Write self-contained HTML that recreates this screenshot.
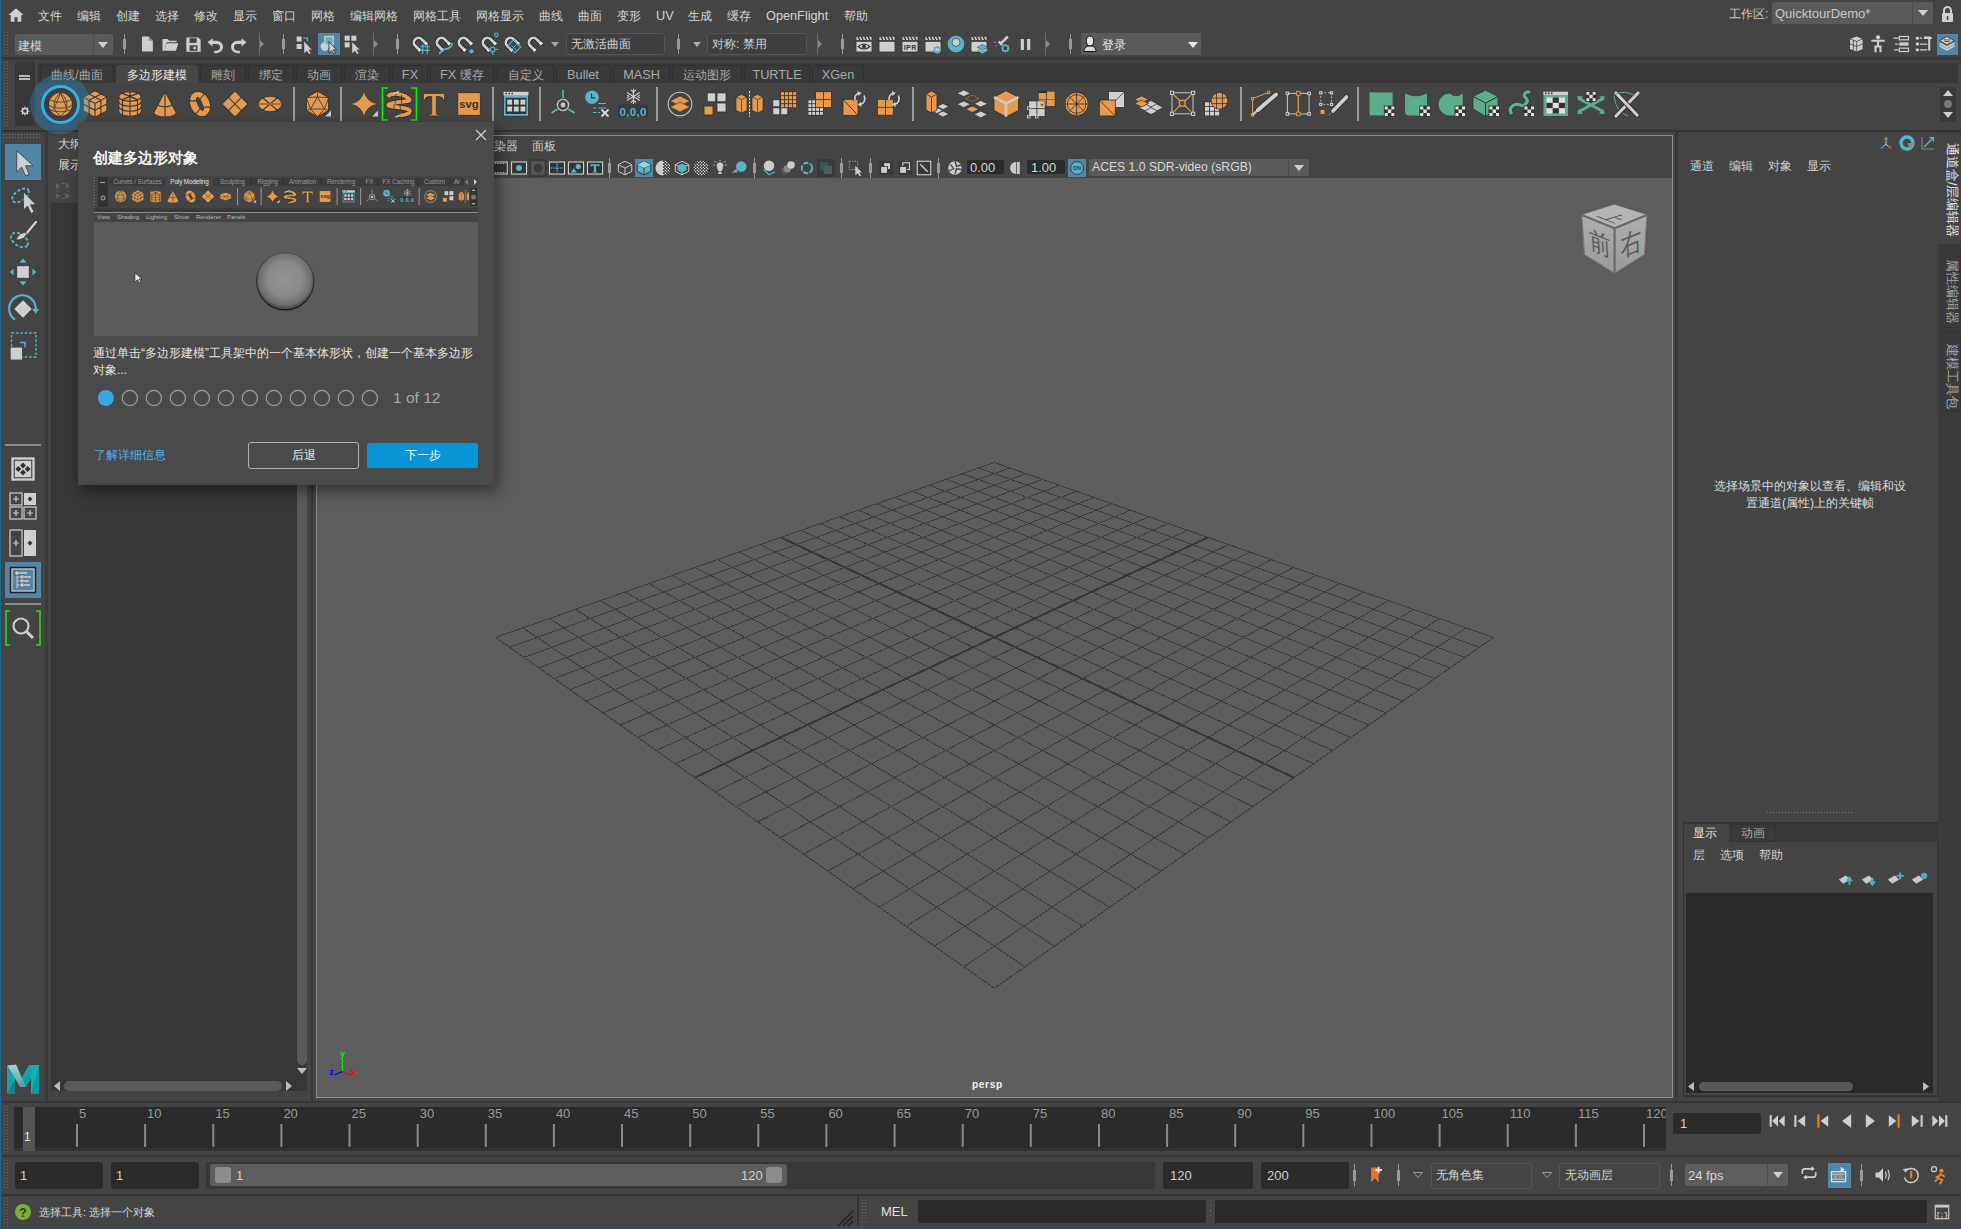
<!DOCTYPE html><html><head><meta charset="utf-8"><style>
html,body{margin:0;padding:0;width:1961px;height:1229px;overflow:hidden;background:#444444;font-family:"Liberation Sans",sans-serif;}
body>div,body>svg{position:absolute;}
svg{overflow:visible}
.t{white-space:nowrap;line-height:1;}
.l{font-size:1.06em}
</style></head><body>
<div style="left:0px;top:0px;width:1px;height:1229px;background:#1b6a8c;"></div>
<div style="left:0px;top:1228px;width:1961px;height:1px;background:#1a5a78;"></div>
<div style="left:0px;top:1227px;width:1961px;height:1px;background:#32505c;"></div>
<svg style="left:7.0px;top:6.0px" width="18" height="18" viewBox="0 0 24 24"><path d="M12 3 L2 12 H5 V21 H10 V15 H14 V21 H19 V12 H22Z" fill="#cfcfcf"/></svg>
<div class="t" style="left:38px;top:10px;font-size:12px;color:#d4d4d4;">文件</div>
<div class="t" style="left:77px;top:10px;font-size:12px;color:#d4d4d4;">编辑</div>
<div class="t" style="left:116px;top:10px;font-size:12px;color:#d4d4d4;">创建</div>
<div class="t" style="left:155px;top:10px;font-size:12px;color:#d4d4d4;">选择</div>
<div class="t" style="left:194px;top:10px;font-size:12px;color:#d4d4d4;">修改</div>
<div class="t" style="left:233px;top:10px;font-size:12px;color:#d4d4d4;">显示</div>
<div class="t" style="left:272px;top:10px;font-size:12px;color:#d4d4d4;">窗口</div>
<div class="t" style="left:311px;top:10px;font-size:12px;color:#d4d4d4;">网格</div>
<div class="t" style="left:350px;top:10px;font-size:12px;color:#d4d4d4;">编辑网格</div>
<div class="t" style="left:413px;top:10px;font-size:12px;color:#d4d4d4;">网格工具</div>
<div class="t" style="left:476px;top:10px;font-size:12px;color:#d4d4d4;">网格显示</div>
<div class="t" style="left:539px;top:10px;font-size:12px;color:#d4d4d4;">曲线</div>
<div class="t" style="left:578px;top:10px;font-size:12px;color:#d4d4d4;">曲面</div>
<div class="t" style="left:617px;top:10px;font-size:12px;color:#d4d4d4;">变形</div>
<div class="t" style="left:656px;top:10px;font-size:12px;color:#d4d4d4;"><span class="l">UV</span></div>
<div class="t" style="left:688px;top:10px;font-size:12px;color:#d4d4d4;">生成</div>
<div class="t" style="left:727px;top:10px;font-size:12px;color:#d4d4d4;">缓存</div>
<div class="t" style="left:766px;top:10px;font-size:12px;color:#d4d4d4;"><span class="l">OpenFlight</span></div>
<div class="t" style="left:844px;top:10px;font-size:12px;color:#d4d4d4;">帮助</div>
<div class="t" style="left:1729px;top:8px;font-size:12px;color:#c8c8c8;">工作区:</div>
<div style="left:1772px;top:2px;width:161px;height:22px;background:#5a5a5a;border-radius:2px"></div>
<div style="left:1912px;top:2px;width:1px;height:22px;background:#4a4a4a;"></div>
<div class="t" style="left:1775px;top:7px;font-size:13px;color:#c8c8c8;">QuicktourDemo*</div>
<svg style="left:1918px;top:10px;" width="10" height="6" viewBox="0 0 10 6"><path d="M0 0H10L5 6Z" fill="#cfcfcf"/></svg>
<svg style="left:1941px;top:5px;" width="13" height="17" viewBox="0 0 13 17"><path d="M3 8V5.5A3.5 3.5 0 0 1 10 5.5V8" stroke="#cfcfcf" stroke-width="2" fill="none"/><rect x="1" y="8" width="11" height="9" rx="1" fill="#cfcfcf"/><rect x="5.8" y="11" width="1.6" height="4" fill="#444"/></svg>
<svg style="left:4px;top:32px;" width="4" height="24" viewBox="0 0 4 24"><g fill="#6a6a6a"><rect x="0" y="0" width="1" height="1"/><rect x="3" y="0" width="1" height="1"/><rect x="0" y="3" width="1" height="1"/><rect x="3" y="3" width="1" height="1"/><rect x="0" y="6" width="1" height="1"/><rect x="3" y="6" width="1" height="1"/><rect x="0" y="9" width="1" height="1"/><rect x="3" y="9" width="1" height="1"/><rect x="0" y="12" width="1" height="1"/><rect x="3" y="12" width="1" height="1"/><rect x="0" y="15" width="1" height="1"/><rect x="3" y="15" width="1" height="1"/><rect x="0" y="18" width="1" height="1"/><rect x="3" y="18" width="1" height="1"/><rect x="0" y="21" width="1" height="1"/><rect x="3" y="21" width="1" height="1"/></g></svg>
<div style="left:15px;top:34px;width:98px;height:21px;background:#5a5a5a;border-radius:2px"></div>
<div style="left:93px;top:34px;width:1px;height:21px;background:#4d4d4d;"></div>
<div class="t" style="left:18px;top:40px;font-size:12px;color:#d4d4d4;">建模</div>
<svg style="left:98px;top:42px;" width="10" height="6" viewBox="0 0 10 6"><path d="M0 0H10L5 6Z" fill="#cfcfcf"/></svg>
<svg style="left:123px;top:34px;" width="3" height="20" viewBox="0 0 3 20"><rect x="1" y="0" width="1" height="20" fill="#999"/><rect x="0" y="5" width="3" height="10" fill="#999"/></svg>
<svg style="left:137.0px;top:34.0px" width="20" height="20" viewBox="0 0 24 24"><path d="M6 3H14L19 8V21H6Z" fill="#cfcfcf"/><path d="M14 3V8H19" fill="#888"/></svg>
<svg style="left:160.0px;top:34.0px" width="20" height="20" viewBox="0 0 24 24"><path d="M3 6H9L11 8H20V10H8L5 20H3Z" fill="#cfcfcf"/><path d="M8 11H22L19 20H5Z" fill="#cfcfcf"/></svg>
<svg style="left:183.5px;top:34.5px" width="19" height="19" viewBox="0 0 24 24"><path d="M3 3H18L21 6V21H3Z" fill="#cfcfcf"/><rect x="7" y="4" width="9" height="6" fill="#444"/><rect x="7" y="13" width="10" height="7" fill="#444"/><rect x="12" y="15" width="3" height="3" fill="#cfcfcf"/></svg>
<svg style="left:205.0px;top:34.0px" width="20" height="20" viewBox="0 0 24 24"><path d="M9 5L3 10L9 15V12H14A4 4 0 0 1 14 20H11V23H14A7 7 0 0 0 14 8H9Z" fill="#cfcfcf"/></svg>
<svg style="left:229.0px;top:34.0px" width="20" height="20" viewBox="0 0 24 24"><path d="M15 5L21 10L15 15V12H10A4 4 0 0 0 10 20H13V23H10A7 7 0 0 1 10 8H15Z" fill="#cfcfcf"/></svg>
<svg style="left:259px;top:33px;" width="6" height="22" viewBox="0 0 6 22"><rect x="0" y="0" width="1" height="22" fill="#6a6a6a"/><path d="M1 7L5 11L1 15Z" fill="#8a8a8a"/></svg>
<svg style="left:282px;top:34px;" width="3" height="20" viewBox="0 0 3 20"><rect x="1" y="0" width="1" height="20" fill="#999"/><rect x="0" y="5" width="3" height="10" fill="#999"/></svg>
<svg style="left:295.0px;top:34.0px" width="20" height="20" viewBox="0 0 24 24"><rect x="2" y="3" width="6" height="6" fill="#cfcfcf"/><rect x="2" y="12" width="6" height="6" fill="#cfcfcf"/><path d="M10 5H15V9" stroke="#5ab4c8" stroke-width="1.5" fill="none"/><path d="M11 9L11 23L14 20L17 24L19 23L16 19H20Z" fill="#cfcfcf"/></svg>
<div style="left:318px;top:33px;width:22px;height:22px;background:#5285a6;"></div>
<svg style="left:319.0px;top:34.0px" width="20" height="20" viewBox="0 0 24 24"><circle cx="7" cy="15" r="5" fill="#cfcfcf"/><rect x="7" y="3" width="10" height="10" fill="#5ab4c8" stroke="#cfcfcf" stroke-width="1.5"/><path d="M12 9L12 23L15 20L18 24L20 23L17 19H21Z" fill="#cfcfcf" stroke="#333" stroke-width="1"/></svg>
<svg style="left:343.0px;top:34.0px" width="20" height="20" viewBox="0 0 24 24"><rect x="2" y="2" width="6" height="6" fill="#cfcfcf"/><rect x="10" y="2" width="6" height="6" fill="#cfcfcf"/><rect x="2" y="10" width="6" height="6" fill="#cfcfcf"/><path d="M11 10L11 23L14 20L17 24L19 23L16 19H20Z" fill="#cfcfcf"/></svg>
<svg style="left:373px;top:33px;" width="6" height="22" viewBox="0 0 6 22"><rect x="0" y="0" width="1" height="22" fill="#6a6a6a"/><path d="M1 7L5 11L1 15Z" fill="#8a8a8a"/></svg>
<svg style="left:396px;top:34px;" width="3" height="20" viewBox="0 0 3 20"><rect x="1" y="0" width="1" height="20" fill="#999"/><rect x="0" y="5" width="3" height="10" fill="#999"/></svg>
<svg style="left:409.0px;top:33.0px" width="22" height="22" viewBox="0 0 24 24"><g transform="rotate(-45 11 11)"><path d="M6 17V10A5 5 0 0 1 16 10V17" stroke="#222" stroke-width="4.6" fill="none"/><path d="M6 17V10A5 5 0 0 1 16 10V17" stroke="#cfcfcf" stroke-width="3" fill="none"/><rect x="4.3" y="15.5" width="3.4" height="2.5" fill="#eee"/><rect x="14.3" y="15.5" width="3.4" height="2.5" fill="#eee"/></g><path d="M12 15H23M12 19H23M15 12V23M20 12V23" stroke="#5ab4c8" stroke-width="1.3"/></svg>
<svg style="left:432.0px;top:33.0px" width="22" height="22" viewBox="0 0 24 24"><g transform="rotate(-45 11 11)"><path d="M6 17V10A5 5 0 0 1 16 10V17" stroke="#222" stroke-width="4.6" fill="none"/><path d="M6 17V10A5 5 0 0 1 16 10V17" stroke="#cfcfcf" stroke-width="3" fill="none"/><rect x="4.3" y="15.5" width="3.4" height="2.5" fill="#eee"/><rect x="14.3" y="15.5" width="3.4" height="2.5" fill="#eee"/></g><path d="M8 23C10 18 13 18 17 17C20 16 22 14 22 11" stroke="#5ab4c8" stroke-width="2" fill="none"/></svg>
<svg style="left:454.0px;top:33.0px" width="22" height="22" viewBox="0 0 24 24"><g transform="rotate(-45 11 11)"><path d="M6 17V10A5 5 0 0 1 16 10V17" stroke="#222" stroke-width="4.6" fill="none"/><path d="M6 17V10A5 5 0 0 1 16 10V17" stroke="#cfcfcf" stroke-width="3" fill="none"/><rect x="4.3" y="15.5" width="3.4" height="2.5" fill="#eee"/><rect x="14.3" y="15.5" width="3.4" height="2.5" fill="#eee"/></g><circle cx="19" cy="20" r="2.3" fill="#5ab4c8"/></svg>
<svg style="left:478.0px;top:33.0px" width="22" height="22" viewBox="0 0 24 24"><g transform="rotate(-45 11 11)"><path d="M6 17V10A5 5 0 0 1 16 10V17" stroke="#222" stroke-width="4.6" fill="none"/><path d="M6 17V10A5 5 0 0 1 16 10V17" stroke="#cfcfcf" stroke-width="3" fill="none"/><rect x="4.3" y="15.5" width="3.4" height="2.5" fill="#eee"/><rect x="14.3" y="15.5" width="3.4" height="2.5" fill="#eee"/></g><circle cx="16" cy="18" r="2.5" stroke="#5ab4c8" stroke-width="1.3" fill="none"/><path d="M16 21V24M19 18H22M13 18H11" stroke="#5ab4c8" stroke-width="1.2"/><circle cx="20" cy="2" r="2" stroke="#5ab4c8" stroke-width="1.2" fill="none"/></svg>
<svg style="left:501.0px;top:33.0px" width="22" height="22" viewBox="0 0 24 24"><g transform="rotate(-45 11 11)"><path d="M6 17V10A5 5 0 0 1 16 10V17" stroke="#222" stroke-width="4.6" fill="none"/><path d="M6 17V10A5 5 0 0 1 16 10V17" stroke="#cfcfcf" stroke-width="3" fill="none"/><rect x="4.3" y="15.5" width="3.4" height="2.5" fill="#eee"/><rect x="14.3" y="15.5" width="3.4" height="2.5" fill="#eee"/></g><rect x="9" y="10" width="11" height="9" transform="rotate(45 14.5 14.5)" stroke="#5ab4c8" stroke-width="1.2" fill="none"/><path d="M11 13L17 19M12.5 17L16 13.5" stroke="#5ab4c8" stroke-width="1"/></svg>
<svg style="left:524.0px;top:33.0px" width="22" height="22" viewBox="0 0 24 24"><g transform="rotate(-45 11 11)"><path d="M6 17V10A5 5 0 0 1 16 10V17" stroke="#222" stroke-width="4.6" fill="none"/><path d="M6 17V10A5 5 0 0 1 16 10V17" stroke="#cfcfcf" stroke-width="3" fill="none"/><rect x="4.3" y="15.5" width="3.4" height="2.5" fill="#eee"/><rect x="14.3" y="15.5" width="3.4" height="2.5" fill="#eee"/></g></svg>
<svg style="left:551px;top:42px;" width="8" height="5" viewBox="0 0 8 5"><path d="M0 0H8L4 5Z" fill="#aaa"/></svg>
<div style="left:566px;top:33px;width:99px;height:22px;background:#3f3f3f;border:1px solid #555;border-radius:3px;box-sizing:border-box"></div>
<div class="t" style="left:571px;top:38px;font-size:12px;color:#d0d0d0;">无激活曲面</div>
<svg style="left:677px;top:34px;" width="3" height="20" viewBox="0 0 3 20"><rect x="1" y="0" width="1" height="20" fill="#999"/><rect x="0" y="5" width="3" height="10" fill="#999"/></svg>
<svg style="left:693px;top:42px;" width="8" height="5" viewBox="0 0 8 5"><path d="M0 0H8L4 5Z" fill="#aaa"/></svg>
<div style="left:707px;top:33px;width:100px;height:22px;background:#3f3f3f;border:1px solid #555;border-radius:3px;box-sizing:border-box"></div>
<div class="t" style="left:712px;top:38px;font-size:12px;color:#d0d0d0;">对称: 禁用</div>
<svg style="left:817px;top:33px;" width="6" height="22" viewBox="0 0 6 22"><rect x="0" y="0" width="1" height="22" fill="#6a6a6a"/><path d="M1 7L5 11L1 15Z" fill="#8a8a8a"/></svg>
<svg style="left:841px;top:34px;" width="3" height="20" viewBox="0 0 3 20"><rect x="1" y="0" width="1" height="20" fill="#999"/><rect x="0" y="5" width="3" height="10" fill="#999"/></svg>
<svg style="left:854.0px;top:34.0px" width="20" height="20" viewBox="0 0 24 24"><rect x="2.5" y="3" width="19" height="4.5" fill="#cfcfcf" stroke="#222" stroke-width="0.6"/><path d="M5 3.5L7 7M9 3.5L11 7M13 3.5L15 7M17 3.5L19 7" stroke="#333" stroke-width="1.6"/><rect x="2.5" y="9" width="19" height="12.5" fill="#cfcfcf" stroke="#222" stroke-width="0.6"/><path d="M5 15Q12 9 19 15Q12 21 5 15Z" fill="none" stroke="#333" stroke-width="1.3"/><circle cx="12" cy="15" r="2.3" fill="#333"/></svg>
<svg style="left:877.0px;top:34.0px" width="20" height="20" viewBox="0 0 24 24"><rect x="2.5" y="3" width="19" height="4.5" fill="#cfcfcf" stroke="#222" stroke-width="0.6"/><path d="M5 3.5L7 7M9 3.5L11 7M13 3.5L15 7M17 3.5L19 7" stroke="#333" stroke-width="1.6"/><rect x="2.5" y="9" width="19" height="12.5" fill="#cfcfcf" stroke="#222" stroke-width="0.6"/></svg>
<svg style="left:900.0px;top:34.0px" width="20" height="20" viewBox="0 0 24 24"><rect x="2.5" y="3" width="19" height="4.5" fill="#cfcfcf" stroke="#222" stroke-width="0.6"/><path d="M5 3.5L7 7M9 3.5L11 7M13 3.5L15 7M17 3.5L19 7" stroke="#333" stroke-width="1.6"/><rect x="2.5" y="9" width="19" height="12.5" fill="#cfcfcf" stroke="#222" stroke-width="0.6"/><text x="12" y="19.5" font-size="8.5" font-family="Liberation Sans" font-weight="bold" text-anchor="middle" fill="#333" textLength="15">IPR</text></svg>
<svg style="left:923.0px;top:34.0px" width="20" height="20" viewBox="0 0 24 24"><rect x="2.5" y="3" width="19" height="4.5" fill="#cfcfcf" stroke="#222" stroke-width="0.6"/><path d="M5 3.5L7 7M9 3.5L11 7M13 3.5L15 7M17 3.5L19 7" stroke="#333" stroke-width="1.6"/><rect x="2.5" y="9" width="19" height="12.5" fill="#cfcfcf" stroke="#222" stroke-width="0.6"/><g transform="translate(17 19)"><circle r="3.2" fill="none" stroke="#5ab4c8" stroke-width="1.76"/><rect x="-0.90" y="-4.64" width="1.79" height="1.92" fill="#5ab4c8" transform="rotate(0)"/><rect x="-0.90" y="-4.64" width="1.79" height="1.92" fill="#5ab4c8" transform="rotate(45)"/><rect x="-0.90" y="-4.64" width="1.79" height="1.92" fill="#5ab4c8" transform="rotate(90)"/><rect x="-0.90" y="-4.64" width="1.79" height="1.92" fill="#5ab4c8" transform="rotate(135)"/><rect x="-0.90" y="-4.64" width="1.79" height="1.92" fill="#5ab4c8" transform="rotate(180)"/><rect x="-0.90" y="-4.64" width="1.79" height="1.92" fill="#5ab4c8" transform="rotate(225)"/><rect x="-0.90" y="-4.64" width="1.79" height="1.92" fill="#5ab4c8" transform="rotate(270)"/><rect x="-0.90" y="-4.64" width="1.79" height="1.92" fill="#5ab4c8" transform="rotate(315)"/></g></svg>
<svg style="left:946.0px;top:34.0px" width="20" height="20" viewBox="0 0 24 24"><circle cx="12" cy="12" r="10" fill="#5ab4c8"/><circle cx="12" cy="10" r="4.8" fill="#cfcfcf" stroke="#333" stroke-width="0.8"/></svg>
<svg style="left:969.0px;top:34.0px" width="20" height="20" viewBox="0 0 24 24"><rect x="2.5" y="3" width="19" height="4.5" fill="#cfcfcf" stroke="#222" stroke-width="0.6"/><path d="M5 3.5L7 7M9 3.5L11 7M13 3.5L15 7M17 3.5L19 7" stroke="#333" stroke-width="1.6"/><rect x="2.5" y="9" width="19" height="12.5" fill="#cfcfcf" stroke="#222" stroke-width="0.6"/><path d="M10 16L16 12.5L22 16L16 19.5Z" fill="#5ab4c8" stroke="#333" stroke-width="0.6"/><path d="M10 19L16 22.5L22 19" stroke="#5ab4c8" stroke-width="2" fill="none"/></svg>
<svg style="left:992.0px;top:34.0px" width="20" height="20" viewBox="0 0 24 24"><path d="M11 11L19 3" stroke="#cfcfcf" stroke-width="3"/><path d="M8 9L12 13" stroke="#cfcfcf" stroke-width="3"/><g transform="translate(16 17)"><circle r="3.4" fill="none" stroke="#5ab4c8" stroke-width="1.87"/><rect x="-0.95" y="-4.93" width="1.90" height="2.04" fill="#5ab4c8" transform="rotate(0)"/><rect x="-0.95" y="-4.93" width="1.90" height="2.04" fill="#5ab4c8" transform="rotate(45)"/><rect x="-0.95" y="-4.93" width="1.90" height="2.04" fill="#5ab4c8" transform="rotate(90)"/><rect x="-0.95" y="-4.93" width="1.90" height="2.04" fill="#5ab4c8" transform="rotate(135)"/><rect x="-0.95" y="-4.93" width="1.90" height="2.04" fill="#5ab4c8" transform="rotate(180)"/><rect x="-0.95" y="-4.93" width="1.90" height="2.04" fill="#5ab4c8" transform="rotate(225)"/><rect x="-0.95" y="-4.93" width="1.90" height="2.04" fill="#5ab4c8" transform="rotate(270)"/><rect x="-0.95" y="-4.93" width="1.90" height="2.04" fill="#5ab4c8" transform="rotate(315)"/></g><path d="M2 10H5M4 15L6 13" stroke="#5ab4c8" stroke-width="1.2"/></svg>
<svg style="left:1015.5px;top:34.5px" width="19" height="19" viewBox="0 0 24 24"><rect x="6" y="5" width="4" height="14" fill="#cfcfcf"/><rect x="14" y="5" width="4" height="14" fill="#cfcfcf"/></svg>
<svg style="left:1045px;top:33px;" width="6" height="22" viewBox="0 0 6 22"><rect x="0" y="0" width="1" height="22" fill="#6a6a6a"/><path d="M1 7L5 11L1 15Z" fill="#8a8a8a"/></svg>
<svg style="left:1069px;top:34px;" width="3" height="20" viewBox="0 0 3 20"><rect x="1" y="0" width="1" height="20" fill="#999"/><rect x="0" y="5" width="3" height="10" fill="#999"/></svg>
<div style="left:1081px;top:33px;width:120px;height:22px;background:#5a5a5a;"></div>
<svg style="left:1083px;top:35px;" width="16" height="19" viewBox="0 0 16 19"><ellipse cx="7" cy="6" rx="3.8" ry="5" fill="#e4e4e4" stroke="#111" stroke-width="1"/><path d="M0.8 16.5C1.5 12 4 11 7 11C10 11 12.5 12 13.2 16.5Z" fill="#dcdcdc" stroke="#111" stroke-width="1"/></svg>
<div class="t" style="left:1102px;top:39px;font-size:12px;color:#e8e8e8;">登录</div>
<svg style="left:1188px;top:42px;" width="10" height="6" viewBox="0 0 10 6"><path d="M0 0H10L5 6Z" fill="#e8e8e8"/></svg>
<svg style="left:1845.0px;top:34.0px" width="20" height="20" viewBox="0 0 24 24"><path d="M6 6L14 3L21 6V18L14 21L6 18Z" fill="#cfcfcf"/><path d="M6 6L14 9L21 6M14 9V21M10 7.5V20M6 12L14 15L21 12" stroke="#444" stroke-width="1" fill="none"/></svg>
<svg style="left:1868.0px;top:34.0px" width="20" height="20" viewBox="0 0 24 24"><circle cx="12" cy="4" r="2.5" fill="#cfcfcf"/><path d="M4 8H20M12 8V15M9 22V15H15V22" stroke="#cfcfcf" stroke-width="2.5" fill="none"/></svg>
<svg style="left:1891.0px;top:34.0px" width="20" height="20" viewBox="0 0 24 24"><rect x="10" y="3" width="11" height="4" stroke="#cfcfcf" stroke-width="1.5" fill="none"/><rect x="10" y="10" width="11" height="4" fill="#cfcfcf"/><rect x="10" y="17" width="11" height="4" stroke="#cfcfcf" stroke-width="1.5" fill="none"/><path d="M3 5H9M5 12H9M4 19H9" stroke="#cfcfcf" stroke-width="1.5"/></svg>
<svg style="left:1914.0px;top:34.0px" width="20" height="20" viewBox="0 0 24 24"><circle cx="4" cy="5" r="2" fill="#cfcfcf"/><circle cx="4" cy="12" r="2" fill="#cfcfcf"/><circle cx="4" cy="19" r="2" fill="#cfcfcf"/><path d="M7 5H10M7 12H16M7 19H16" stroke="#cfcfcf" stroke-width="1.5"/><path d="M12 3H20L22 6H12Z" fill="#cfcfcf"/><rect x="17" y="6" width="2.5" height="14" fill="#cfcfcf"/></svg>
<div style="left:1937px;top:34px;width:21px;height:21px;background:#5285a6;"></div>
<svg style="left:1937.0px;top:34.0px" width="20" height="20" viewBox="0 0 24 24"><path d="M12 3L21 8L12 13L3 8Z" fill="#cfcfcf" stroke="#333" stroke-width="1"/><path d="M3 11L12 16L21 11M3 14L12 19L21 14" stroke="#cfcfcf" stroke-width="2" fill="none"/><path d="M8 7H12M13 7H16M9 9H15" stroke="#333" stroke-width="1"/></svg>
<div style="left:2px;top:57px;width:1959px;height:3px;background:#373737;"></div>
<svg style="left:4px;top:62px;" width="4" height="64" viewBox="0 0 4 64"><g fill="#6a6a6a"><rect x="0" y="0" width="1" height="1"/><rect x="3" y="0" width="1" height="1"/><rect x="0" y="3" width="1" height="1"/><rect x="3" y="3" width="1" height="1"/><rect x="0" y="6" width="1" height="1"/><rect x="3" y="6" width="1" height="1"/><rect x="0" y="9" width="1" height="1"/><rect x="3" y="9" width="1" height="1"/><rect x="0" y="12" width="1" height="1"/><rect x="3" y="12" width="1" height="1"/><rect x="0" y="15" width="1" height="1"/><rect x="3" y="15" width="1" height="1"/><rect x="0" y="18" width="1" height="1"/><rect x="3" y="18" width="1" height="1"/><rect x="0" y="21" width="1" height="1"/><rect x="3" y="21" width="1" height="1"/><rect x="0" y="24" width="1" height="1"/><rect x="3" y="24" width="1" height="1"/><rect x="0" y="27" width="1" height="1"/><rect x="3" y="27" width="1" height="1"/><rect x="0" y="30" width="1" height="1"/><rect x="3" y="30" width="1" height="1"/><rect x="0" y="33" width="1" height="1"/><rect x="3" y="33" width="1" height="1"/><rect x="0" y="36" width="1" height="1"/><rect x="3" y="36" width="1" height="1"/><rect x="0" y="39" width="1" height="1"/><rect x="3" y="39" width="1" height="1"/><rect x="0" y="42" width="1" height="1"/><rect x="3" y="42" width="1" height="1"/><rect x="0" y="45" width="1" height="1"/><rect x="3" y="45" width="1" height="1"/><rect x="0" y="48" width="1" height="1"/><rect x="3" y="48" width="1" height="1"/><rect x="0" y="51" width="1" height="1"/><rect x="3" y="51" width="1" height="1"/><rect x="0" y="54" width="1" height="1"/><rect x="3" y="54" width="1" height="1"/><rect x="0" y="57" width="1" height="1"/><rect x="3" y="57" width="1" height="1"/><rect x="0" y="60" width="1" height="1"/><rect x="3" y="60" width="1" height="1"/><rect x="0" y="63" width="1" height="1"/><rect x="3" y="63" width="1" height="1"/></g></svg>
<div style="left:15px;top:62px;width:20px;height:64px;background:#373737;"></div>
<div style="left:19px;top:75px;width:11px;height:2px;background:#bbb;"></div>
<div style="left:19px;top:78px;width:11px;height:1.5px;background:#bbb;"></div>
<svg style="left:19.0px;top:105.0px" width="12" height="12" viewBox="0 0 24 24"><circle cx="12" cy="12" r="5" fill="none" stroke="#ccc" stroke-width="3"/><path d="M12 3V6M12 18V21M3 12H6M18 12H21M5.6 5.6L7.8 7.8M16.2 16.2L18.4 18.4M5.6 18.4L7.8 16.2M16.2 7.8L18.4 5.6" stroke="#ccc" stroke-width="2.5"/></svg>
<div style="left:38px;top:63px;width:1920px;height:20px;background:#373737;"></div>
<div style="left:40px;top:65px;width:74px;height:18px;background:#393939;border-radius:3px 3px 0 0;border:1px solid #2f2f2f;border-bottom:none;box-sizing:border-box"></div>
<div class="t" style="left:40px;top:69px;width:74px;text-align:center;font-size:12px;color:#a8a8a8">曲线/曲面</div>
<div style="left:116px;top:65px;width:82px;height:18px;background:#474747;border-radius:3px 3px 0 0;"></div>
<div class="t" style="left:116px;top:69px;width:82px;text-align:center;font-size:12px;color:#e8e8e8">多边形建模</div>
<div style="left:200px;top:65px;width:46px;height:18px;background:#393939;border-radius:3px 3px 0 0;border:1px solid #2f2f2f;border-bottom:none;box-sizing:border-box"></div>
<div class="t" style="left:200px;top:69px;width:46px;text-align:center;font-size:12px;color:#a8a8a8">雕刻</div>
<div style="left:248px;top:65px;width:46px;height:18px;background:#393939;border-radius:3px 3px 0 0;border:1px solid #2f2f2f;border-bottom:none;box-sizing:border-box"></div>
<div class="t" style="left:248px;top:69px;width:46px;text-align:center;font-size:12px;color:#a8a8a8">绑定</div>
<div style="left:296px;top:65px;width:46px;height:18px;background:#393939;border-radius:3px 3px 0 0;border:1px solid #2f2f2f;border-bottom:none;box-sizing:border-box"></div>
<div class="t" style="left:296px;top:69px;width:46px;text-align:center;font-size:12px;color:#a8a8a8">动画</div>
<div style="left:344px;top:65px;width:46px;height:18px;background:#393939;border-radius:3px 3px 0 0;border:1px solid #2f2f2f;border-bottom:none;box-sizing:border-box"></div>
<div class="t" style="left:344px;top:69px;width:46px;text-align:center;font-size:12px;color:#a8a8a8">渲染</div>
<div style="left:392px;top:65px;width:36px;height:18px;background:#393939;border-radius:3px 3px 0 0;border:1px solid #2f2f2f;border-bottom:none;box-sizing:border-box"></div>
<div class="t" style="left:392px;top:69px;width:36px;text-align:center;font-size:12px;color:#a8a8a8"><span class="l">FX</span></div>
<div style="left:430px;top:65px;width:64px;height:18px;background:#393939;border-radius:3px 3px 0 0;border:1px solid #2f2f2f;border-bottom:none;box-sizing:border-box"></div>
<div class="t" style="left:430px;top:69px;width:64px;text-align:center;font-size:12px;color:#a8a8a8"><span class="l">FX </span>缓存</div>
<div style="left:497px;top:65px;width:57px;height:18px;background:#393939;border-radius:3px 3px 0 0;border:1px solid #2f2f2f;border-bottom:none;box-sizing:border-box"></div>
<div class="t" style="left:497px;top:69px;width:57px;text-align:center;font-size:12px;color:#a8a8a8">自定义</div>
<div style="left:556px;top:65px;width:54px;height:18px;background:#393939;border-radius:3px 3px 0 0;border:1px solid #2f2f2f;border-bottom:none;box-sizing:border-box"></div>
<div class="t" style="left:556px;top:69px;width:54px;text-align:center;font-size:12px;color:#a8a8a8"><span class="l">Bullet</span></div>
<div style="left:613px;top:65px;width:57px;height:18px;background:#393939;border-radius:3px 3px 0 0;border:1px solid #2f2f2f;border-bottom:none;box-sizing:border-box"></div>
<div class="t" style="left:613px;top:69px;width:57px;text-align:center;font-size:12px;color:#a8a8a8"><span class="l">MASH</span></div>
<div style="left:672px;top:65px;width:70px;height:18px;background:#393939;border-radius:3px 3px 0 0;border:1px solid #2f2f2f;border-bottom:none;box-sizing:border-box"></div>
<div class="t" style="left:672px;top:69px;width:70px;text-align:center;font-size:12px;color:#a8a8a8">运动图形</div>
<div style="left:744px;top:65px;width:66px;height:18px;background:#393939;border-radius:3px 3px 0 0;border:1px solid #2f2f2f;border-bottom:none;box-sizing:border-box"></div>
<div class="t" style="left:744px;top:69px;width:66px;text-align:center;font-size:12px;color:#a8a8a8"><span class="l">TURTLE</span></div>
<div style="left:812px;top:65px;width:52px;height:18px;background:#393939;border-radius:3px 3px 0 0;border:1px solid #2f2f2f;border-bottom:none;box-sizing:border-box"></div>
<div class="t" style="left:812px;top:69px;width:52px;text-align:center;font-size:12px;color:#a8a8a8"><span class="l">XGen</span></div>
<div style="left:38px;top:83px;width:1920px;height:43px;background:#444444;"></div>
<svg style="left:79.5px;top:89.0px" width="30" height="30" viewBox="0 0 24 24"><path d="M12 1.5L21.5 6.5V17.5L12 22.5L2.5 17.5V6.5Z" fill="#e69a4d"/><path d="M12 1.5L21.5 6.5V17.5L12 22.5L2.5 17.5V6.5Z M2.5 6.5L12 11.5L21.5 6.5M12 11.5V22.5M7.25 4L16.75 9M16.75 4L7.25 9M7.25 9V20M2.5 12L12 17M16.75 9V20M21.5 12L12 17" stroke="#3a3a3a" stroke-width="0.9" fill="none"/></svg>
<svg style="left:115.0px;top:89.0px" width="30" height="30" viewBox="0 0 24 24"><path d="M3 6A9 3.8 0 0 1 21 6V18A9 3.8 0 0 1 3 18Z" fill="#e69a4d"/><path d="M3 6A9 3.8 0 0 1 21 6V18A9 3.8 0 0 1 3 18Z M3 6A9 3.8 0 0 0 21 6M3 10A9 3.8 0 0 0 21 10M3 14A9 3.8 0 0 0 21 14M12 9.8V21.8M12 2.2V9.8M5.5 3.3L18.5 8.7M18.5 3.3L5.5 8.7M6 9.3V21M18 9.3V21" stroke="#3a3a3a" stroke-width="0.9" fill="none"/></svg>
<svg style="left:149.5px;top:89.0px" width="30" height="30" viewBox="0 0 24 24"><path d="M12 1.5L3 19A9 3.5 0 0 0 21 19Z" fill="#e69a4d"/><path d="M12 1.5L3 19A9 3.5 0 0 0 21 19Z M12 1.5V22.5M6.3 12.5A6 2.5 0 0 0 17.7 12.5" stroke="#3a3a3a" stroke-width="0.9" fill="none"/></svg>
<svg style="left:185.0px;top:89.0px" width="30" height="30" viewBox="0 0 24 24"><g transform="rotate(-25 12 12)"><ellipse cx="12" cy="12" rx="8" ry="10.5" fill="#e69a4d"/><ellipse cx="12" cy="12" rx="1.6" ry="5.5" fill="#444"/><path d="M12 12m-8 0a8 10.5 0 1 0 16 0a8 10.5 0 1 0 -16 0M5 6L10.5 8.5M19 6L13.5 8.5M5 18L10.5 15.5M19 18L13.5 15.5" stroke="#3a3a3a" stroke-width="0.9" fill="none"/><ellipse cx="12" cy="12" rx="1.6" ry="5.5" stroke="#3a3a3a" stroke-width="0.9" fill="none"/></g></svg>
<svg style="left:219.8px;top:89.0px" width="30" height="30" viewBox="0 0 24 24"><path d="M12 1.5L22.5 12L12 22.5L1.5 12Z" fill="#e69a4d"/><path d="M12 1.5L22.5 12L12 22.5L1.5 12Z M6.75 6.75L17.25 17.25M17.25 6.75L6.75 17.25" stroke="#3a3a3a" stroke-width="0.9" fill="none"/></svg>
<svg style="left:255.0px;top:89.0px" width="30" height="30" viewBox="0 0 24 24"><ellipse cx="12" cy="12" rx="9.5" ry="6.2" fill="#e69a4d"/><ellipse cx="12" cy="12" rx="9.5" ry="6.2" stroke="#3a3a3a" stroke-width="0.9" fill="none"/><path d="M6 7L18 17M18 7L6 17" stroke="#3a3a3a" stroke-width="0.9" fill="none"/><path d="M2.5 12H21.5" stroke="#9a6a3a" stroke-width="1.4"/></svg>
<div style="left:293px;top:87px;width:2px;height:34px;background:#9a9a9a;"></div>
<svg style="left:0px;top:0px;" width="1961" height="1229" viewBox="0 0 1961 1229"><polygon points="317.5,91.2 328.6,97.6 328.6,110.4 317.5,116.8 306.4,110.4 306.4,97.6" fill="#e69a4d" stroke="#2e2e2e" stroke-width="0.9"/><path d="M317.5 97L324.5 109L310.5 109Z M317.5 91.2L317.5 97M328.6 97.6L317.5 97L306.4 97.6L310.5 109L306.4 110.4M317.5 116.8L310.5 109M317.5 116.8L324.5 109L328.6 110.4M324.5 109L328.6 97.6" stroke="#2e2e2e" stroke-width="0.8" fill="none"/><path d="M331 116.5H325L331 110.5Z" fill="#c8c8c8"/><path d="M364 90.6Q366 102 377.7 104Q366 106 364 117Q362 106 350.4 104Q362 102 364 90.6Z" fill="#e69a4d" stroke="#2e2e2e" stroke-width="0.6"/><path d="M378 116.5H372L378 110.5Z" fill="#c8c8c8"/><rect x="503.5" y="91.8" width="25" height="24.4" fill="#5ab4c8" stroke="#2e2e2e" stroke-width="0.8"/><rect x="503.5" y="91.8" width="25" height="3.4" fill="#d0d0d0"/><path d="M505.5 93.5H507M508.5 93.5H510M511.5 93.5H513" stroke="#333" stroke-width="1.6"/><rect x="505.6" y="97.8" width="20.8" height="16.2" fill="#333"/><rect x="507.3" y="99.6" width="4.8" height="5" fill="#d0d0d0"/><rect x="507.3" y="106.5" width="4.8" height="5" fill="#d0d0d0"/><rect x="513.9" y="99.6" width="4.8" height="5" fill="#d0d0d0"/><rect x="513.9" y="106.5" width="4.8" height="5" fill="#d0d0d0"/><rect x="520.5" y="99.6" width="4.8" height="5" fill="#d0d0d0"/><rect x="520.5" y="106.5" width="4.8" height="5" fill="#d0d0d0"/><circle cx="563" cy="105" r="5.6" fill="none" stroke="#c8c8c8" stroke-width="1.3"/><circle cx="563" cy="105" r="2.4" fill="#c8c8c8"/><path d="M563 90V98M551.5 113L557.5 109M574.5 113L568.5 109" stroke="#5ab4c8" stroke-width="1.6"/><circle cx="592" cy="97.3" r="6.8" fill="#5ab4c8"/><path d="M591.5 93.5V97.8H595" stroke="#333" stroke-width="1.2" fill="none"/><path d="M598 103.5H606M593 108H596.5M598 108H606M593 112.5H596.5M598 112.5H600" stroke="#5ab4c8" stroke-width="1.1"/><path d="M601.5 109.5L608.5 116.5M608.5 109.5L601.5 116.5" stroke="#ddd" stroke-width="1.8"/><rect x="618" y="104.5" width="30" height="12.5" fill="#3a3a3a"/><g stroke="#d0d0d0" stroke-width="1.1"><path d="M633.4 89V104M627 92.5L639.8 100.5M639.8 92.5L627 100.5"/><path d="M630.8 89.8L633.4 92.2L636 89.8M630.8 102.5L633.4 100.2L636 102.5M627.2 95.2L629 96.5L627 98.2M639.6 95.2L637.8 96.5L639.8 98.2" fill="none"/></g><text x="633" y="115.8" font-size="11.5" font-weight="bold" font-family="Liberation Sans" text-anchor="middle" fill="#5ab4c8" textLength="27">0,0,0</text></svg>
<div style="left:340px;top:87px;width:2px;height:34px;background:#9a9a9a;"></div>
<svg style="left:381px;top:87px;" width="37" height="34" viewBox="0 0 37 34"><path d="M7 1H1.5V33H7M30 1H35.5V33H30" stroke="#00f000" stroke-width="1.7" fill="none"/></svg>
<svg style="left:384.0px;top:89.0px" width="30" height="30" viewBox="0 0 24 24"><path d="M3 6C6 2 17 4 20.5 8.5C22 11 7 9.5 3.5 12.5C1.5 15 18 14 20.5 17C22 19.5 16 21 13 21" stroke="#2e2e2e" stroke-width="4.4" fill="none"/><path d="M3 6C6 2 17 4 20.5 8.5C22 11 7 9.5 3.5 12.5C1.5 15 18 14 20.5 17C22 19.5 16 21 13 21" stroke="#e69a4d" stroke-width="3" fill="none"/><path d="M9 8.5V11.5M14 8.7V11.7M8 13V16M13 13.5V16.5M9.5 4V7M14 4.5V7.5M10 18V21" stroke="#2e2e2e" stroke-width="0.6"/><path d="M8 3.5L12 2M9 22.5L13 21" stroke="#ccc" stroke-width="1.2"/></svg>
<svg style="left:419.0px;top:89.0px" width="30" height="30" viewBox="0 0 24 24"><path d="M3.5 3.5H20.5V9H19.5Q19 6 16 6H13.8V19.5Q13.8 20.5 15.5 20.5H16.5V21.5H7.5V20.5H8.5Q10.2 20.5 10.2 19.5V6H8Q5 6 4.5 9H3.5Z" fill="#e69a4d" stroke="#2e2e2e" stroke-width="0.6"/></svg>
<svg style="left:454.0px;top:89.0px" width="30" height="30" viewBox="0 0 24 24"><rect x="3" y="3" width="18" height="18" fill="#e69a4d" stroke="#2e2e2e" stroke-width="0.6"/><text x="12" y="15" font-size="9" font-weight="bold" font-family="Liberation Sans" text-anchor="middle" fill="#333">svg</text></svg>
<div style="left:492px;top:87px;width:2px;height:34px;background:#9a9a9a;"></div>
<div style="left:539px;top:87px;width:2px;height:34px;background:#9a9a9a;"></div>
<div style="left:656px;top:87px;width:2px;height:34px;background:#9a9a9a;"></div>
<svg style="left:0px;top:0px;" width="1961" height="1229" viewBox="0 0 1961 1229"><circle cx="680" cy="104" r="11.8" fill="none" stroke="#c8c8c8" stroke-width="1.1"/><path d="M670 101L680 96L690 101L680 106Z" fill="#e69a4d" stroke="#2e2e2e" stroke-width="0.6"/><path d="M670 107L680 102L690 107L680 112Z" fill="#e69a4d" stroke="#2e2e2e" stroke-width="0.6"/><rect x="707.2" y="92.9" width="8.5" height="8.9" fill="#cfcfcf" stroke="#2e2e2e" stroke-width="0.8"/><rect x="717" y="92.9" width="9" height="8.9" fill="#cfcfcf" stroke="#2e2e2e" stroke-width="0.8"/><rect x="717" y="103" width="9" height="9" fill="#cfcfcf" stroke="#2e2e2e" stroke-width="0.8"/><rect x="704" y="106" width="9" height="9" fill="#e69a4d" stroke="#2e2e2e" stroke-width="0.8"/><path d="M736 97L741.5 94.5L747 97V110.5L741.5 113L736 110.5Z" fill="#e69a4d" stroke="#2e2e2e" stroke-width="0.7"/><path d="M736 97L741.5 99.5L747 97M741.5 99.5V113" stroke="#2e2e2e" stroke-width="0.7" fill="none"/><path d="M752 97L757.5 94.5L763 97V110.5L757.5 113L752 110.5Z" fill="#e69a4d" stroke="#2e2e2e" stroke-width="0.7"/><path d="M752 97L757.5 99.5L763 97M757.5 99.5V113" stroke="#2e2e2e" stroke-width="0.7" fill="none"/><path d="M749.5 91V117" stroke="#ddd" stroke-width="1" stroke-dasharray="2.2 1.3"/><rect x="772.8" y="99.8" width="7" height="7" fill="#cfcfcf" stroke="#2e2e2e" stroke-width="0.8"/><rect x="772.8" y="107.8" width="7" height="7" fill="#cfcfcf" stroke="#2e2e2e" stroke-width="0.8"/><rect x="780.8" y="107.8" width="7" height="7" fill="#cfcfcf" stroke="#2e2e2e" stroke-width="0.8"/><rect x="780.5" y="91.6" width="16" height="16" fill="#2e2e2e"/><rect x="781.00" y="92.10" width="3.2" height="3.2" fill="#e69a4d"/><rect x="781.00" y="96.10" width="3.2" height="3.2" fill="#e69a4d"/><rect x="781.00" y="100.10" width="3.2" height="3.2" fill="#e69a4d"/><rect x="781.00" y="104.10" width="3.2" height="3.2" fill="#e69a4d"/><rect x="785.00" y="92.10" width="3.2" height="3.2" fill="#e69a4d"/><rect x="785.00" y="96.10" width="3.2" height="3.2" fill="#e69a4d"/><rect x="785.00" y="100.10" width="3.2" height="3.2" fill="#e69a4d"/><rect x="785.00" y="104.10" width="3.2" height="3.2" fill="#e69a4d"/><rect x="789.00" y="92.10" width="3.2" height="3.2" fill="#e69a4d"/><rect x="789.00" y="96.10" width="3.2" height="3.2" fill="#e69a4d"/><rect x="789.00" y="100.10" width="3.2" height="3.2" fill="#e69a4d"/><rect x="789.00" y="104.10" width="3.2" height="3.2" fill="#e69a4d"/><rect x="793.00" y="92.10" width="3.2" height="3.2" fill="#e69a4d"/><rect x="793.00" y="96.10" width="3.2" height="3.2" fill="#e69a4d"/><rect x="793.00" y="100.10" width="3.2" height="3.2" fill="#e69a4d"/><rect x="793.00" y="104.10" width="3.2" height="3.2" fill="#e69a4d"/><rect x="807.9" y="99.8" width="15.5" height="15.5" fill="#2e2e2e"/><rect x="808.40" y="100.30" width="3" height="3" fill="#cfcfcf"/><rect x="808.40" y="104.15" width="3" height="3" fill="#cfcfcf"/><rect x="808.40" y="108.00" width="3" height="3" fill="#cfcfcf"/><rect x="808.40" y="111.85" width="3" height="3" fill="#cfcfcf"/><rect x="812.25" y="100.30" width="3" height="3" fill="#cfcfcf"/><rect x="812.25" y="104.15" width="3" height="3" fill="#cfcfcf"/><rect x="812.25" y="108.00" width="3" height="3" fill="#cfcfcf"/><rect x="812.25" y="111.85" width="3" height="3" fill="#cfcfcf"/><rect x="816.10" y="100.30" width="3" height="3" fill="#cfcfcf"/><rect x="816.10" y="104.15" width="3" height="3" fill="#cfcfcf"/><rect x="816.10" y="108.00" width="3" height="3" fill="#cfcfcf"/><rect x="816.10" y="111.85" width="3" height="3" fill="#cfcfcf"/><rect x="819.95" y="100.30" width="3" height="3" fill="#cfcfcf"/><rect x="819.95" y="104.15" width="3" height="3" fill="#cfcfcf"/><rect x="819.95" y="108.00" width="3" height="3" fill="#cfcfcf"/><rect x="819.95" y="111.85" width="3" height="3" fill="#cfcfcf"/><rect x="815.5" y="91.6" width="16" height="16" fill="#2e2e2e"/><rect x="816.00" y="92.10" width="7.1" height="7.1" fill="#e69a4d"/><rect x="816.00" y="100.00" width="7.1" height="7.1" fill="#e69a4d"/><rect x="823.90" y="92.10" width="7.1" height="7.1" fill="#e69a4d"/><rect x="823.90" y="100.00" width="7.1" height="7.1" fill="#e69a4d"/><rect x="843" y="99.3" width="15" height="16" fill="#e69a4d" stroke="#2e2e2e" stroke-width="0.8"/><path d="M843 99.3L858 115.3" stroke="#2e2e2e" stroke-width="0.9"/><g transform="translate(852 91.5)" fill="none" stroke="#2e2e2e" stroke-width="3"><path d="M3 9A6 6 0 0 1 7 1.5"/><path d="M12 4A6 6 0 0 1 8 13"/></g><g transform="translate(852 91.5)"><path d="M3 9A6 6 0 0 1 7 1.5" stroke="#cfcfcf" stroke-width="1.8" fill="none"/><path d="M12 4A6 6 0 0 1 8 13" stroke="#cfcfcf" stroke-width="1.8" fill="none"/><path d="M5.5 -0.5L9.5 1.5L6 4.5Z M9.5 15.5L5.5 13L9 10.5Z" fill="#cfcfcf"/></g><rect x="877.4" y="99.3" width="16" height="16" fill="#2e2e2e"/><rect x="877.90" y="99.80" width="7.1" height="7.1" fill="#e69a4d"/><rect x="877.90" y="107.70" width="7.1" height="7.1" fill="#e69a4d"/><rect x="885.80" y="99.80" width="7.1" height="7.1" fill="#e69a4d"/><rect x="885.80" y="107.70" width="7.1" height="7.1" fill="#e69a4d"/><g transform="translate(886.3 91.5)" fill="none" stroke="#2e2e2e" stroke-width="3"><path d="M3 9A6 6 0 0 1 7 1.5"/><path d="M12 4A6 6 0 0 1 8 13"/></g><g transform="translate(886.3 91.5)"><path d="M3 9A6 6 0 0 1 7 1.5" stroke="#cfcfcf" stroke-width="1.8" fill="none"/><path d="M12 4A6 6 0 0 1 8 13" stroke="#cfcfcf" stroke-width="1.8" fill="none"/><path d="M5.5 -0.5L9.5 1.5L6 4.5Z M9.5 15.5L5.5 13L9 10.5Z" fill="#cfcfcf"/></g></svg>
<div style="left:912px;top:87px;width:2px;height:34px;background:#9a9a9a;"></div>
<svg style="left:0px;top:0px;" width="1961" height="1229" viewBox="0 0 1961 1229"><path d="M937.0 106.5L943.0 103.5L949.0 106.5L943.0 109.5Z" fill="#cfcfcf" stroke="#2e2e2e" stroke-width="0.7" /><path d="M931.0 110.5L937.0 107.5L943.0 110.5L937.0 113.5Z" fill="#cfcfcf" stroke="#2e2e2e" stroke-width="0.7" /><path d="M937.0 114.0L943.0 111.0L949.0 114.0L943.0 117.0Z" fill="#cfcfcf" stroke="#2e2e2e" stroke-width="0.7" /><path d="M926 94L931.5 91L937 94V110L931.5 113L926 110Z" fill="#e69a4d" stroke="#2e2e2e" stroke-width="0.8"/><path d="M926 94L931.5 97L937 94M931.5 97V113" stroke="#2e2e2e" stroke-width="0.8" fill="none"/><path d="M957.0 93.3L963.8 90.0L970.5 93.3L963.8 96.6Z" fill="#cfcfcf" stroke="#2e2e2e" stroke-width="0.7" /><path d="M965.5 98.4L972.2 95.1L979.0 98.4L972.2 101.8Z" fill="none" stroke="#e69a4d" stroke-width="0.7" stroke-dasharray="1.5 1"/><path d="M957.0 104.2L963.8 100.9L970.5 104.2L963.8 107.5Z" fill="#cfcfcf" stroke="#2e2e2e" stroke-width="0.7" /><path d="M974.0 103.8L980.7 100.5L987.5 103.8L980.7 107.1Z" fill="#cfcfcf" stroke="#2e2e2e" stroke-width="0.7" /><path d="M965.5 109.2L972.2 105.9L979.0 109.2L972.2 112.5Z" fill="#e69a4d" stroke="#2e2e2e" stroke-width="0.7" /><path d="M974.0 114.4L980.7 111.1L987.5 114.4L980.7 117.8Z" fill="#cfcfcf" stroke="#2e2e2e" stroke-width="0.7" /><path d="M1006 90.7L1018.5 97.2V110.5L1006 116.8L994 110.5V97.2Z" fill="#e69a4d" stroke="#2e2e2e" stroke-width="0.8"/><path d="M994 97.2L1006 103.5L1018.5 97.2M1006 103.5V116.8" stroke="#c8c8c8" stroke-width="2.6" fill="none"/><rect x="1038.2" y="91.1" width="17" height="16" fill="#2e2e2e"/><rect x="1038.7" y="93" width="7.6" height="6.2" fill="#e69a4d"/><rect x="1047" y="91.6" width="7.7" height="7.6" fill="#e69a4d"/><rect x="1047" y="99.6" width="7.7" height="6.6" fill="#e69a4d"/><rect x="1038.7" y="99.6" width="7.6" height="6.6" fill="#e69a4d"/><rect x="1028.6" y="100.8" width="16.9" height="16" fill="#2e2e2e"/><rect x="1029.1" y="101.3" width="7.4" height="7" fill="#cfcfcf"/><rect x="1029.1" y="109.1" width="7.4" height="7" fill="#cfcfcf"/><rect x="1037.3" y="101.3" width="7.4" height="7" fill="#cfcfcf"/><rect x="1037.3" y="109.1" width="7.4" height="7" fill="#cfcfcf"/><rect x="1027.5" y="106.7" width="2.6" height="2.6" fill="#444" stroke="#ddd" stroke-width="0.8"/><rect x="1027.5" y="115.3" width="2.6" height="2.6" fill="#444" stroke="#ddd" stroke-width="0.8"/><rect x="1035.5" y="115.3" width="2.6" height="2.6" fill="#444" stroke="#ddd" stroke-width="0.8"/><rect x="1040.7" y="103.4" width="2.6" height="2.6" fill="#444" stroke="#ddd" stroke-width="0.8"/><rect x="1040.6" y="103.2" width="3" height="3" fill="none" stroke="#e69a4d" stroke-width="0.9"/><circle cx="1076.6" cy="104" r="11.6" fill="#e69a4d" stroke="#2e2e2e" stroke-width="0.7"/><circle cx="1076.6" cy="104" r="9.3" fill="none" stroke="#2e2e2e" stroke-width="0.8"/><path d="M1076.6 92.4V115.6M1065 104H1088.2M1068.4 95.8L1084.8 112.2M1084.8 95.8L1068.4 112.2" stroke="#2e2e2e" stroke-width="0.8"/><circle cx="1076.6" cy="104" r="1" fill="#2e2e2e"/><rect x="1108.6" y="91.6" width="16" height="16" fill="#cfcfcf" stroke="#2e2e2e" stroke-width="0.8"/><path d="M1108.6 107.6L1124.6 91.6" stroke="#2e2e2e" stroke-width="0.8"/><rect x="1099.3" y="100" width="16" height="16" fill="#e69a4d" stroke="#2e2e2e" stroke-width="0.8"/><path d="M1099.3 100L1115.3 116" stroke="#2e2e2e" stroke-width="0.8"/><path d="M1144.5 104.0L1151.0 100.5L1157.5 104.0L1151.0 107.5Z" fill="#cfcfcf" stroke="#2e2e2e" stroke-width="0.7" /><path d="M1150.0 107.5L1156.5 104.0L1163.0 107.5L1156.5 111.0Z" fill="#cfcfcf" stroke="#2e2e2e" stroke-width="0.7" /><path d="M1139.0 107.5L1145.5 104.0L1152.0 107.5L1145.5 111.0Z" fill="#cfcfcf" stroke="#2e2e2e" stroke-width="0.7" /><path d="M1144.5 111.0L1151.0 107.5L1157.5 111.0L1151.0 114.5Z" fill="#cfcfcf" stroke="#2e2e2e" stroke-width="0.7" /><path d="M1134.5 99.5L1141.5 96.0L1148.5 99.5L1141.5 103.0Z" fill="#e69a4d" stroke="#2e2e2e" stroke-width="0.7" /><path d="M1134.5 103.5L1141.5 100.0L1148.5 103.5L1141.5 107.0Z" fill="#e69a4d" stroke="#2e2e2e" stroke-width="0.7" /><rect x="1172" y="92.8" width="21" height="21" fill="none" stroke="#c8c8c8" stroke-width="1"/><path d="M1174 95L1179.5 100.5M1191 95L1185.5 100.5M1174 111.6L1179.5 106.1M1191 111.6L1185.5 106.1" stroke="#e69a4d" stroke-width="1.1"/><rect x="1179.5" y="100.5" width="5.6" height="5.6" fill="none" stroke="#e69a4d" stroke-width="1.4"/><rect x="1170.4" y="91.2" width="3.2" height="3.2" fill="#444" stroke="#ddd" stroke-width="0.9"/><rect x="1191.6" y="91.2" width="3.2" height="3.2" fill="#444" stroke="#ddd" stroke-width="0.9"/><rect x="1170.4" y="112.2" width="3.2" height="3.2" fill="#444" stroke="#ddd" stroke-width="0.9"/><rect x="1191.6" y="112.2" width="3.2" height="3.2" fill="#444" stroke="#ddd" stroke-width="0.9"/><rect x="1204.5" y="101.7" width="15.2" height="14.3" fill="#2e2e2e"/><rect x="1205.0" y="102.2" width="4.2" height="3.9" fill="#cfcfcf"/><rect x="1205.0" y="106.9" width="4.2" height="3.9" fill="#cfcfcf"/><rect x="1205.0" y="111.6" width="4.2" height="3.9" fill="#cfcfcf"/><rect x="1210.0" y="102.2" width="4.2" height="3.9" fill="#cfcfcf"/><rect x="1210.0" y="106.9" width="4.2" height="3.9" fill="#cfcfcf"/><rect x="1210.0" y="111.6" width="4.2" height="3.9" fill="#cfcfcf"/><rect x="1215.0" y="102.2" width="4.2" height="3.9" fill="#cfcfcf"/><rect x="1215.0" y="106.9" width="4.2" height="3.9" fill="#cfcfcf"/><rect x="1215.0" y="111.6" width="4.2" height="3.9" fill="#cfcfcf"/><circle cx="1219.5" cy="100.8" r="8.4" fill="#e69a4d" stroke="#2e2e2e" stroke-width="0.8"/><path d="M1216.5 92.9V108.7M1222.5 92.9V108.7M1211.4 98H1227.6M1211.4 103.6H1227.6" stroke="#2e2e2e" stroke-width="0.8"/></svg>
<div style="left:1240px;top:87px;width:2px;height:34px;background:#9a9a9a;"></div>
<div style="left:1357px;top:87px;width:2px;height:34px;background:#9a9a9a;"></div>
<svg style="left:0px;top:0px;" width="1961" height="1229" viewBox="0 0 1961 1229"><path d="M1252.5 115L1252.5 98.6L1268.6 92.4" stroke="#e69a4d" stroke-width="1" fill="none"/><rect x="1251.3" y="97.4" width="2.4" height="2.4" fill="#444" stroke="#e69a4d" stroke-width="0.9"/><rect x="1267.4" y="91.2" width="2.4" height="2.4" fill="#444" stroke="#e69a4d" stroke-width="0.9"/><rect x="1251.3" y="113.8" width="2.4" height="2.4" fill="#444" stroke="#e69a4d" stroke-width="0.9"/><path d="M1258 110L1276 94.5" stroke="#2e2e2e" stroke-width="5.6" stroke-linecap="round"/><path d="M1258 110L1276 94.5" stroke="#cfcfcf" stroke-width="4" stroke-linecap="round"/><path d="M1252.5 115L1260 108" stroke="#cfcfcf" stroke-width="2"/><rect x="1287.4" y="93.4" width="21.7" height="20.5" fill="none" stroke="#c8c8c8" stroke-width="1"/><path d="M1298.3 93.4V113.9" stroke="#e69a4d" stroke-width="1.3"/><rect x="1286.1" y="92.1" width="2.6" height="2.6" fill="#444" stroke="#ddd" stroke-width="0.9"/><rect x="1307.8" y="92.1" width="2.6" height="2.6" fill="#444" stroke="#ddd" stroke-width="0.9"/><rect x="1286.1" y="112.6" width="2.6" height="2.6" fill="#444" stroke="#ddd" stroke-width="0.9"/><rect x="1307.8" y="112.6" width="2.6" height="2.6" fill="#444" stroke="#ddd" stroke-width="0.9"/><rect x="1296.5" y="91.6" width="3.6" height="3.6" fill="#444" stroke="#e69a4d" stroke-width="0.9"/><rect x="1296.5" y="112.1" width="3.6" height="3.6" fill="#444" stroke="#e69a4d" stroke-width="0.9"/><rect x="1320.8" y="92.8" width="10.8" height="11.6" fill="none" stroke="#c8c8c8" stroke-width="0.9" stroke-dasharray="2 1.6"/><rect x="1319.7" y="91.7" width="2.2" height="2.2" fill="#444" stroke="#ddd" stroke-width="0.9"/><rect x="1330.5" y="91.7" width="2.2" height="2.2" fill="#444" stroke="#ddd" stroke-width="0.9"/><rect x="1319.7" y="103.3" width="2.2" height="2.2" fill="#444" stroke="#ddd" stroke-width="0.9"/><rect x="1330.5" y="103.3" width="2.2" height="2.2" fill="#444" stroke="#ddd" stroke-width="0.9"/><rect x="1320.5" y="110" width="4" height="4" fill="#e69a4d"/><path d="M1333 111L1346.5 97" stroke="#2e2e2e" stroke-width="5.2" stroke-linecap="round"/><path d="M1333 111L1346.5 97" stroke="#cfcfcf" stroke-width="3.6" stroke-linecap="round"/><path d="M1329 115L1333 111" stroke="#e69a4d" stroke-width="1" stroke-dasharray="1 1"/><rect x="1369.6" y="92.4" width="23" height="23" fill="#5dae88"/><rect x="1384.3" y="106" width="10.5" height="10.5" fill="#e0e0e0" stroke="#2e2e2e" stroke-width="0.8"/><rect x="1387.80" y="106.00" width="3.50" height="3.50" fill="#333"/><rect x="1384.30" y="109.50" width="3.50" height="3.50" fill="#333"/><rect x="1391.30" y="109.50" width="3.50" height="3.50" fill="#333"/><rect x="1387.80" y="113.00" width="3.50" height="3.50" fill="#333"/><path d="M1405 93.4Q1416 99 1427 93.4V115.4H1409Q1405 115.4 1405 111Z" fill="#5dae88"/><rect x="1419.8" y="106" width="10.5" height="10.5" fill="#e0e0e0" stroke="#2e2e2e" stroke-width="0.8"/><rect x="1423.30" y="106.00" width="3.50" height="3.50" fill="#333"/><rect x="1419.80" y="109.50" width="3.50" height="3.50" fill="#333"/><rect x="1426.80" y="109.50" width="3.50" height="3.50" fill="#333"/><rect x="1423.30" y="113.00" width="3.50" height="3.50" fill="#333"/><path d="M1438.6 104A11 11 0 0 0 1449.6 115.4H1462.7V93.4Q1456 99 1449.6 93.4A11 11 0 0 0 1438.6 104Z" fill="#5dae88"/><rect x="1455" y="106" width="10.5" height="10.5" fill="#e0e0e0" stroke="#2e2e2e" stroke-width="0.8"/><rect x="1458.50" y="106.00" width="3.50" height="3.50" fill="#333"/><rect x="1455.00" y="109.50" width="3.50" height="3.50" fill="#333"/><rect x="1462.00" y="109.50" width="3.50" height="3.50" fill="#333"/><rect x="1458.50" y="113.00" width="3.50" height="3.50" fill="#333"/><path d="M1485.6 90.3L1498 96.5V109L1485.6 116.4L1473 109V96.5Z" fill="#5dae88" stroke="#2e2e2e" stroke-width="0.7"/><path d="M1473 96.5L1485.6 103L1498 96.5M1485.6 103V116.4" stroke="#2e2e2e" stroke-width="1" fill="none"/><rect x="1489" y="106" width="10.5" height="10.5" fill="#e0e0e0" stroke="#2e2e2e" stroke-width="0.8"/><rect x="1492.50" y="106.00" width="3.50" height="3.50" fill="#333"/><rect x="1489.00" y="109.50" width="3.50" height="3.50" fill="#333"/><rect x="1496.00" y="109.50" width="3.50" height="3.50" fill="#333"/><rect x="1492.50" y="113.00" width="3.50" height="3.50" fill="#333"/><path d="M1511 113C1508 106 1516 103 1520 105C1525 107 1530 101 1525 97C1522 95 1527 91 1529 92" stroke="#2e2e2e" stroke-width="5" fill="none" stroke-linecap="round"/><path d="M1511 113C1508 106 1516 103 1520 105C1525 107 1530 101 1525 97C1522 95 1527 91 1529 92" stroke="#5dae88" stroke-width="3.4" fill="none" stroke-linecap="round"/><rect x="1524" y="106" width="10.5" height="10.5" fill="#e0e0e0" stroke="#2e2e2e" stroke-width="0.8"/><rect x="1527.50" y="106.00" width="3.50" height="3.50" fill="#333"/><rect x="1524.00" y="109.50" width="3.50" height="3.50" fill="#333"/><rect x="1531.00" y="109.50" width="3.50" height="3.50" fill="#333"/><rect x="1527.50" y="113.00" width="3.50" height="3.50" fill="#333"/><rect x="1543.5" y="91.8" width="24.5" height="24.2" fill="#5dae88"/><rect x="1543.5" y="91.8" width="24.5" height="3.2" fill="#d0d0d0"/><path d="M1545 93.4H1546.5M1548 93.4H1549.5M1551 93.4H1552.5" stroke="#333" stroke-width="1.6"/><rect x="1546.5" y="97.5" width="18.5" height="16" fill="#e0e0e0"/><rect x="1552.7" y="97.5" width="6.17" height="5.33" fill="#333"/><rect x="1546.5" y="102.8" width="6.17" height="5.33" fill="#333"/><rect x="1558.8" y="102.8" width="6.17" height="5.33" fill="#333"/><rect x="1552.7" y="108.2" width="6.17" height="5.33" fill="#333"/><path d="M1578 98L1604 112M1578 112L1604 98" stroke="#5dae88" stroke-width="2.8"/><path d="M1577 96L1583 96.5L1579.5 101Z M1605 96L1599 96.5L1602.5 101Z M1577 114L1583 113.5L1579.5 109Z M1605 114L1599 113.5L1602.5 109Z" fill="#5dae88"/><rect x="1586" y="91.5" width="10" height="10" fill="#e0e0e0" stroke="#2e2e2e" stroke-width="0.8"/><rect x="1589.33" y="91.50" width="3.33" height="3.33" fill="#333"/><rect x="1586.00" y="94.83" width="3.33" height="3.33" fill="#333"/><rect x="1592.67" y="94.83" width="3.33" height="3.33" fill="#333"/><rect x="1589.33" y="98.17" width="3.33" height="3.33" fill="#333"/><path d="M1614 96Q1616 112 1628 116" stroke="#5dae88" stroke-width="1" fill="none"/><path d="M1616 116L1638 93" stroke="#2e2e2e" stroke-width="4.800000000000001" stroke-linecap="round"/><path d="M1616 116L1638 93" stroke="#cfcfcf" stroke-width="3.2" stroke-linecap="round"/><path d="M1616 93L1637 115" stroke="#2e2e2e" stroke-width="4.800000000000001" stroke-linecap="round"/><path d="M1616 93L1637 115" stroke="#cfcfcf" stroke-width="3.2" stroke-linecap="round"/><path d="M1614 95Q1625 89 1635 96" stroke="#5dae88" stroke-width="1" fill="none"/></svg>
<div style="left:1940px;top:87px;width:16px;height:35px;background:#3a3a3a;"></div>
<svg style="left:1943px;top:90px;" width="10" height="6" viewBox="0 0 10 6"><path d="M0 6H10L5 0Z" fill="#ccc"/></svg>
<svg style="left:1944px;top:100px;" width="8" height="8" viewBox="0 0 8 8"><circle cx="4" cy="4" r="4" fill="#777"/></svg>
<svg style="left:1943px;top:112px;" width="10" height="6" viewBox="0 0 10 6"><path d="M0 0H10L5 6Z" fill="#ccc"/></svg>
<div style="left:2px;top:126px;width:1959px;height:4px;background:#444444;"></div>
<div style="left:2px;top:130px;width:1959px;height:2px;background:#333333;"></div>
<div style="left:45px;top:132px;width:3px;height:969px;background:#3b3b3b;"></div>
<svg style="left:3px;top:134px;" width="38" height="5" viewBox="0 0 38 5"><rect x="0" y="0" width="1" height="1" fill="#777"/><rect x="0" y="3" width="1" height="1" fill="#777"/><rect x="3" y="0" width="1" height="1" fill="#777"/><rect x="3" y="3" width="1" height="1" fill="#777"/><rect x="6" y="0" width="1" height="1" fill="#777"/><rect x="6" y="3" width="1" height="1" fill="#777"/><rect x="9" y="0" width="1" height="1" fill="#777"/><rect x="9" y="3" width="1" height="1" fill="#777"/><rect x="12" y="0" width="1" height="1" fill="#777"/><rect x="12" y="3" width="1" height="1" fill="#777"/><rect x="15" y="0" width="1" height="1" fill="#777"/><rect x="15" y="3" width="1" height="1" fill="#777"/><rect x="18" y="0" width="1" height="1" fill="#777"/><rect x="18" y="3" width="1" height="1" fill="#777"/><rect x="21" y="0" width="1" height="1" fill="#777"/><rect x="21" y="3" width="1" height="1" fill="#777"/><rect x="24" y="0" width="1" height="1" fill="#777"/><rect x="24" y="3" width="1" height="1" fill="#777"/><rect x="27" y="0" width="1" height="1" fill="#777"/><rect x="27" y="3" width="1" height="1" fill="#777"/><rect x="30" y="0" width="1" height="1" fill="#777"/><rect x="30" y="3" width="1" height="1" fill="#777"/><rect x="33" y="0" width="1" height="1" fill="#777"/><rect x="33" y="3" width="1" height="1" fill="#777"/><rect x="36" y="0" width="1" height="1" fill="#777"/><rect x="36" y="3" width="1" height="1" fill="#777"/></svg>
<div style="left:5px;top:144px;width:36px;height:36px;background:#5285a6;"></div>
<svg style="left:8.0px;top:147.0px" width="30" height="30" viewBox="0 0 24 24"><path d="M7 3L7 20L11 16L14 23L17 22L14 15H20Z" fill="#cfcfcf" stroke="#333" stroke-width="0.6"/></svg>
<svg style="left:0px;top:0px;" width="1961" height="1229" viewBox="0 0 1961 1229"><ellipse cx="20.5" cy="195.5" rx="9.5" ry="5.2" transform="rotate(-35 20.5 195.5)" fill="none" stroke="#5ab4c8" stroke-width="2" stroke-dasharray="3 2"/><path d="M23.5 192L23.5 210L27.5 206L31 213.5L34 212L30.5 204.8H36Z" fill="#cfcfcf" stroke="#333" stroke-width="0.7"/><ellipse cx="19.5" cy="240" rx="9.5" ry="5.8" transform="rotate(35 19.5 240)" fill="none" stroke="#5ab4c8" stroke-width="2" stroke-dasharray="3 2"/><path d="M26 234L36 222" stroke="#333" stroke-width="3.6" stroke-linecap="round"/><path d="M26 234L36 222" stroke="#cfcfcf" stroke-width="2.4" stroke-linecap="round"/><path d="M16 240Q20 231 27 233Q25 240 16 240Z" fill="#cfcfcf" stroke="#333" stroke-width="0.6"/><rect x="11.5" y="333" width="24.5" height="24" fill="none" stroke="#5ab4c8" stroke-width="1.4" stroke-dasharray="2.6 1.8"/><rect x="10.7" y="347.6" width="11.3" height="12" fill="#cfcfcf"/><path d="M20 342.5H25V347.5" stroke="#5ab4c8" stroke-width="1.4" fill="none"/></svg>
<svg style="left:9.0px;top:258.0px" width="28" height="28" viewBox="0 0 24 24"><rect x="7" y="7" width="10" height="10" fill="#cfcfcf"/><path d="M12 0.5L9 4H15Z M12 23.5L9 20H15Z M0.5 12L4 9V15Z M23.5 12L20 9V15Z" fill="#5ab4c8"/></svg>
<svg style="left:7.0px;top:293.0px" width="32" height="32" viewBox="0 0 24 24"><path d="M12 5.5L18.5 12L12 18.5L5.5 12Z" fill="#cfcfcf"/><path d="M6 20A10 10 0 1 1 21.5 13" stroke="#5ab4c8" stroke-width="1.6" fill="none"/><path d="M19 12H24L21.5 15.5Z" fill="#5ab4c8"/></svg>
<div style="left:5px;top:444px;width:36px;height:2px;background:#8a8a8a;"></div>
<svg style="left:9.0px;top:455.0px" width="28" height="28" viewBox="0 0 24 24"><rect x="2" y="2" width="20" height="20" fill="#cfcfcf"/><rect x="4" y="4" width="16" height="16" fill="#444"/><rect x="5" y="5" width="14" height="14" fill="#cfcfcf"/><path d="M12 6.5L14.5 9L12 11.5L9.5 9Z M12 12.5L14.5 15L12 17.5L9.5 15Z M8 9.5L10.5 12L8 14.5L5.5 12Z M16 9.5L18.5 12L16 14.5L13.5 12Z" fill="#333"/></svg>
<svg style="left:9px;top:492px;" width="28" height="28" viewBox="0 0 28 28"><g fill="none" stroke="#cfcfcf" stroke-width="1.2"><rect x="1" y="1" width="12" height="12"/><rect x="1" y="15" width="12" height="12"/><rect x="15" y="15" width="12" height="12"/></g><rect x="15" y="1" width="12" height="12" fill="#cfcfcf"/><path d="M4 7H10M7 4V10M4 21H10M7 18V24M18 21H24M21 18V24" stroke="#cfcfcf" stroke-width="1.2"/><path d="M21 4.5L23.5 7L21 9.5L18.5 7Z" fill="#333"/></svg>
<svg style="left:9px;top:529px;" width="28" height="28" viewBox="0 0 28 28"><rect x="1" y="1" width="12" height="26" fill="none" stroke="#cfcfcf" stroke-width="1.2"/><rect x="15" y="1" width="12" height="26" fill="#cfcfcf"/><path d="M4 14H10M7 11V17" stroke="#cfcfcf" stroke-width="1.2"/><path d="M21 11.5L23.5 14L21 16.5L18.5 14Z" fill="#333"/></svg>
<div style="left:5px;top:562px;width:36px;height:36px;background:#5285a6;"></div>
<svg style="left:9px;top:566px;" width="28" height="28" viewBox="0 0 28 28"><rect x="2" y="2" width="24" height="24" fill="none" stroke="#222" stroke-width="2.5"/><rect x="3" y="3" width="22" height="22" fill="none" stroke="#cfcfcf" stroke-width="1.3"/><path d="M8 7V22M8 11H11M8 15H11M8 19H11" stroke="#cfcfcf" stroke-width="1"/><g fill="#cfcfcf" stroke="#333" stroke-width="0.5"><rect x="6" y="5" width="4" height="4"/><rect x="11" y="9" width="4" height="4"/><rect x="11" y="13" width="4" height="4"/><rect x="11" y="17" width="4" height="4"/></g><path d="M10 7H18M15 11H22M15 15H20M15 19H21" stroke="#cfcfcf" stroke-width="1.5"/></svg>
<div style="left:5px;top:603px;width:36px;height:2px;background:#8a8a8a;"></div>
<svg style="left:5px;top:610px;" width="36" height="36" viewBox="0 0 36 36"><path d="M5 1H1V35H5M31 1H35V35H31" stroke="#22dd22" stroke-width="1.6" fill="none"/><circle cx="16" cy="16" r="7.5" fill="none" stroke="#ccc" stroke-width="2.2"/><path d="M21 21L28 28" stroke="#ccc" stroke-width="3"/></svg>
<svg style="left:7px;top:1064px;" width="32" height="30" viewBox="0 0 32 30"><defs><linearGradient id="mg1" x1="0" y1="0" x2="0" y2="1"><stop offset="0" stop-color="#a6d6da"/><stop offset="1" stop-color="#4f9ca2"/></linearGradient><linearGradient id="mg2" x1="0" y1="0" x2="1" y2="1"><stop offset="0" stop-color="#0fb8b8"/><stop offset="1" stop-color="#0a8a90"/></linearGradient></defs><rect x="0" y="1.5" width="8" height="28" fill="#12a4a8"/><path d="M0 29.5L8 16V29.5Z" fill="#1a7f88"/><path d="M13 17L22 1H32L19 23Z" fill="url(#mg2)"/><rect x="24" y="1" width="8" height="28.5" fill="#10b0b2"/><path d="M24 29.5L32 3V29.5Z" fill="#0d9aa0"/><path d="M0.5 1.5L9 0.5L19 23H13Z" fill="url(#mg1)"/></svg>
<div class="t" style="left:58px;top:138px;font-size:12px;color:#d8d8d8;">大纲</div>
<div class="t" style="left:58px;top:159px;font-size:12px;color:#d8d8d8;">展示</div>
<svg style="left:55px;top:182px;" width="16" height="18" viewBox="0 0 16 18"><path d="M1 1L5.5 4L1 7Z M10.5 1L15 4L10.5 7Z M1 11L5.5 14L1 17Z M10.5 11L15 14L10.5 17Z" fill="#626262"/><path d="M6 1.5H10M6 16.5H10M3 8V10M13 8V10" stroke="#626262" stroke-width="1"/></svg>
<div style="left:51px;top:203px;width:256px;height:888px;background:#373737;"></div>
<div style="left:297px;top:210px;width:10px;height:855px;background:#5a5a5a;border-radius:5px"></div>
<svg style="left:297px;top:1068px;" width="10" height="7" viewBox="0 0 10 7"><path d="M0 0H10L5 6Z" fill="#bbb"/></svg>
<div style="left:64px;top:1081px;width:218px;height:10px;background:#5a5a5a;border-radius:5px"></div>
<svg style="left:54px;top:1081px;" width="6" height="10" viewBox="0 0 6 10"><path d="M6 0V10L0 5Z" fill="#bbb"/></svg>
<svg style="left:286px;top:1081px;" width="6" height="10" viewBox="0 0 6 10"><path d="M0 0V10L6 5Z" fill="#bbb"/></svg>
<div style="left:311px;top:132px;width:2px;height:969px;background:#363636;"></div>
<div style="left:316px;top:135px;width:1357px;height:963px;background:#8c8c8c;"></div>
<div style="left:317px;top:136px;width:1355px;height:42px;background:#444444;"></div>
<div style="left:317px;top:178px;width:1355px;height:919px;background:#5d5d5d;"></div>
<div style="left:1673px;top:132px;width:2px;height:969px;background:#444444;"></div>
<div style="left:1675px;top:132px;width:3px;height:969px;background:#363636;"></div>
<div class="t" style="left:338px;top:140px;font-size:12px;color:#d0d0d0;">视图</div>
<div class="t" style="left:370px;top:140px;font-size:12px;color:#d0d0d0;">着色</div>
<div class="t" style="left:402px;top:140px;font-size:12px;color:#d0d0d0;">照明</div>
<div class="t" style="left:434px;top:140px;font-size:12px;color:#d0d0d0;">显示</div>
<div class="t" style="left:482px;top:140px;font-size:12px;color:#d0d0d0;">渲染器</div>
<div class="t" style="left:532px;top:140px;font-size:12px;color:#d0d0d0;">面板</div>
<svg style="left:317px;top:178px;" width="1355" height="919" viewBox="0 0 1355 919"><g transform="translate(-317,-178)"><path d="M994.3 462.5L495.6 637.4M994.3 462.5L1493.4 637.4M1010.0 468.0L509.6 647.3M978.6 468.0L1479.4 647.3M1026.1 473.6L524.0 657.4M962.5 473.7L1464.9 657.4M1042.5 479.4L538.9 667.8M946.1 479.4L1450.1 667.9M1059.3 485.3L554.2 678.6M929.3 485.3L1434.8 678.6M1076.5 491.3L569.9 689.7M912.1 491.3L1419.0 689.7M1094.0 497.4L586.1 701.1M894.6 497.5L1402.8 701.1M1111.9 503.7L602.8 712.8M876.7 503.7L1386.1 712.9M1130.3 510.2L620.1 725.0M858.4 510.2L1368.8 725.0M1149.0 516.7L637.9 737.5M839.6 516.8L1351.0 737.5M1168.2 523.5L656.2 750.4M820.4 523.5L1332.6 750.5M1187.9 530.3L675.2 763.8M800.8 530.4L1313.6 763.8M1228.6 544.6L715.1 791.8M760.1 544.7L1273.7 791.9M1249.8 552.0L736.1 806.6M739.0 552.1L1252.7 806.6M1271.4 559.6L757.8 821.9M717.3 559.6L1231.0 821.9M1293.6 567.4L780.3 837.7M695.2 567.4L1208.5 837.8M1316.3 575.4L803.7 854.1M672.4 575.4L1185.1 854.2M1339.7 583.5L827.9 871.1M649.1 583.6L1160.9 871.2M1363.6 591.9L853.0 888.8M625.2 591.9L1135.8 888.9M1388.2 600.5L879.1 907.2M600.6 600.6L1109.7 907.2M1413.5 609.4L906.2 926.3M575.4 609.4L1082.6 926.3M1439.4 618.5L934.4 946.1M549.5 618.5L1054.4 946.1M1466.0 627.8L963.8 966.8M522.9 627.8L1025.0 966.8M1493.4 637.4L994.4 988.3M495.6 637.4L994.4 988.3" stroke="#3c3c3c" stroke-width="1" fill="none" shape-rendering="crispEdges"/><path d="M1208.0 537.4L694.8 777.6M780.7 537.4L1294.0 777.6" stroke="#383838" stroke-width="2" fill="none" shape-rendering="crispEdges"/></g></svg>
<div class="t" style="left:972px;top:1079.5px;font-size:10.2px;color:#f2f2f2;font-weight:bold;letter-spacing:0.6px">persp</div>
<div style="left:1941px;top:132px;width:20px;height:969px;background:#3a3a3a;"></div>
<div class="t" style="left:1690px;top:160px;font-size:12px;color:#d0d0d0;">通道</div>
<div class="t" style="left:1729px;top:160px;font-size:12px;color:#d0d0d0;">编辑</div>
<div class="t" style="left:1768px;top:160px;font-size:12px;color:#d0d0d0;">对象</div>
<div class="t" style="left:1807px;top:160px;font-size:12px;color:#d0d0d0;">显示</div>
<div class="t" style="left:1680px;top:478px;width:260px;text-align:center;font-size:12px;line-height:16.5px;color:#dcdcdc;white-space:normal">选择场景中的对象以查看、编辑和设<br>置通道(属性)上的关键帧</div>
<div style="left:1683px;top:822px;width:255px;height:276px;background:#373737;"></div>
<div style="left:1687px;top:893px;width:246px;height:195px;background:#2a2a2a;"></div>
<div style="left:2px;top:1101px;width:1959px;height:2px;background:#363636;"></div>
<svg style="left:4px;top:1106px;" width="4" height="46" viewBox="0 0 4 46"><g fill="#6a6a6a"><rect x="0" y="0" width="1" height="1"/><rect x="3" y="0" width="1" height="1"/><rect x="0" y="3" width="1" height="1"/><rect x="3" y="3" width="1" height="1"/><rect x="0" y="6" width="1" height="1"/><rect x="3" y="6" width="1" height="1"/><rect x="0" y="9" width="1" height="1"/><rect x="3" y="9" width="1" height="1"/><rect x="0" y="12" width="1" height="1"/><rect x="3" y="12" width="1" height="1"/><rect x="0" y="15" width="1" height="1"/><rect x="3" y="15" width="1" height="1"/><rect x="0" y="18" width="1" height="1"/><rect x="3" y="18" width="1" height="1"/><rect x="0" y="21" width="1" height="1"/><rect x="3" y="21" width="1" height="1"/><rect x="0" y="24" width="1" height="1"/><rect x="3" y="24" width="1" height="1"/><rect x="0" y="27" width="1" height="1"/><rect x="3" y="27" width="1" height="1"/><rect x="0" y="30" width="1" height="1"/><rect x="3" y="30" width="1" height="1"/><rect x="0" y="33" width="1" height="1"/><rect x="3" y="33" width="1" height="1"/><rect x="0" y="36" width="1" height="1"/><rect x="3" y="36" width="1" height="1"/><rect x="0" y="39" width="1" height="1"/><rect x="3" y="39" width="1" height="1"/><rect x="0" y="42" width="1" height="1"/><rect x="3" y="42" width="1" height="1"/><rect x="0" y="45" width="1" height="1"/><rect x="3" y="45" width="1" height="1"/></g></svg>
<div style="left:14px;top:1107px;width:1652px;height:44px;background:#2b2b2b;"></div>
<div style="left:14px;top:1148px;width:1652px;height:3px;background:#333333;"></div>
<div style="left:23.0px;top:1107px;width:12px;height:44px;background:#555555;"></div>
<div class="t" style="left:24px;top:1131px;font-size:12px;color:#e8e8e8;">1</div>
<svg style="left:0px;top:0px;" width="1961" height="1229" viewBox="0 0 1961 1229"><rect x="76.0" y="1124" width="2" height="23" fill="#8a8a8a"/><rect x="144.1" y="1124" width="2" height="23" fill="#8a8a8a"/><rect x="212.3" y="1124" width="2" height="23" fill="#8a8a8a"/><rect x="280.4" y="1124" width="2" height="23" fill="#8a8a8a"/><rect x="348.5" y="1124" width="2" height="23" fill="#8a8a8a"/><rect x="416.7" y="1124" width="2" height="23" fill="#8a8a8a"/><rect x="484.8" y="1124" width="2" height="23" fill="#8a8a8a"/><rect x="552.9" y="1124" width="2" height="23" fill="#8a8a8a"/><rect x="621.0" y="1124" width="2" height="23" fill="#8a8a8a"/><rect x="689.2" y="1124" width="2" height="23" fill="#8a8a8a"/><rect x="757.3" y="1124" width="2" height="23" fill="#8a8a8a"/><rect x="825.4" y="1124" width="2" height="23" fill="#8a8a8a"/><rect x="893.6" y="1124" width="2" height="23" fill="#8a8a8a"/><rect x="961.7" y="1124" width="2" height="23" fill="#8a8a8a"/><rect x="1029.8" y="1124" width="2" height="23" fill="#8a8a8a"/><rect x="1098.0" y="1124" width="2" height="23" fill="#8a8a8a"/><rect x="1166.1" y="1124" width="2" height="23" fill="#8a8a8a"/><rect x="1234.2" y="1124" width="2" height="23" fill="#8a8a8a"/><rect x="1302.3" y="1124" width="2" height="23" fill="#8a8a8a"/><rect x="1370.5" y="1124" width="2" height="23" fill="#8a8a8a"/><rect x="1438.6" y="1124" width="2" height="23" fill="#8a8a8a"/><rect x="1506.7" y="1124" width="2" height="23" fill="#8a8a8a"/><rect x="1574.9" y="1124" width="2" height="23" fill="#8a8a8a"/><rect x="1643.0" y="1124" width="2" height="23" fill="#8a8a8a"/></svg>
<div style="left:14px;top:1107px;width:1652px;height:16px;overflow:hidden"><div class="t" style="position:absolute;left:65.0px;top:0px;font-size:13px;color:#9a9a9a">5</div><div class="t" style="position:absolute;left:133.1px;top:0px;font-size:13px;color:#9a9a9a">10</div><div class="t" style="position:absolute;left:201.3px;top:0px;font-size:13px;color:#9a9a9a">15</div><div class="t" style="position:absolute;left:269.4px;top:0px;font-size:13px;color:#9a9a9a">20</div><div class="t" style="position:absolute;left:337.5px;top:0px;font-size:13px;color:#9a9a9a">25</div><div class="t" style="position:absolute;left:405.7px;top:0px;font-size:13px;color:#9a9a9a">30</div><div class="t" style="position:absolute;left:473.8px;top:0px;font-size:13px;color:#9a9a9a">35</div><div class="t" style="position:absolute;left:541.9px;top:0px;font-size:13px;color:#9a9a9a">40</div><div class="t" style="position:absolute;left:610.0px;top:0px;font-size:13px;color:#9a9a9a">45</div><div class="t" style="position:absolute;left:678.2px;top:0px;font-size:13px;color:#9a9a9a">50</div><div class="t" style="position:absolute;left:746.3px;top:0px;font-size:13px;color:#9a9a9a">55</div><div class="t" style="position:absolute;left:814.4px;top:0px;font-size:13px;color:#9a9a9a">60</div><div class="t" style="position:absolute;left:882.6px;top:0px;font-size:13px;color:#9a9a9a">65</div><div class="t" style="position:absolute;left:950.7px;top:0px;font-size:13px;color:#9a9a9a">70</div><div class="t" style="position:absolute;left:1018.8px;top:0px;font-size:13px;color:#9a9a9a">75</div><div class="t" style="position:absolute;left:1087.0px;top:0px;font-size:13px;color:#9a9a9a">80</div><div class="t" style="position:absolute;left:1155.1px;top:0px;font-size:13px;color:#9a9a9a">85</div><div class="t" style="position:absolute;left:1223.2px;top:0px;font-size:13px;color:#9a9a9a">90</div><div class="t" style="position:absolute;left:1291.3px;top:0px;font-size:13px;color:#9a9a9a">95</div><div class="t" style="position:absolute;left:1359.5px;top:0px;font-size:13px;color:#9a9a9a">100</div><div class="t" style="position:absolute;left:1427.6px;top:0px;font-size:13px;color:#9a9a9a">105</div><div class="t" style="position:absolute;left:1495.7px;top:0px;font-size:13px;color:#9a9a9a">110</div><div class="t" style="position:absolute;left:1563.9px;top:0px;font-size:13px;color:#9a9a9a">115</div><div class="t" style="position:absolute;left:1632.0px;top:0px;font-size:13px;color:#9a9a9a">120</div></div>
<div style="left:1673px;top:1113px;width:88px;height:21px;background:#2b2b2b;border-radius:2px"></div>
<div class="t" style="left:1680px;top:1117px;font-size:13px;color:#d0d0d0;">1</div>
<svg style="left:1768.0px;top:1111.0px" width="20" height="20" viewBox="0 0 24 24"><rect x="2" y="5" width="2.5" height="14" fill="#cfcfcf"/><path d="M12 5V19L5 12Z M20 5V19L13 12Z" fill="#cfcfcf"/></svg>
<svg style="left:1791.0px;top:1111.0px" width="20" height="20" viewBox="0 0 24 24"><rect x="4" y="5" width="2.5" height="14" fill="#cfcfcf"/><path d="M17 5V19L8 12Z" fill="#cfcfcf"/></svg>
<svg style="left:1814.0px;top:1111.0px" width="20" height="20" viewBox="0 0 24 24"><rect x="4" y="4" width="2.5" height="16" fill="#e8832e"/><path d="M17 5V19L8 12Z" fill="#cfcfcf"/></svg>
<svg style="left:1837.0px;top:1111.0px" width="20" height="20" viewBox="0 0 24 24"><path d="M17 4V20L6 12Z" fill="#cfcfcf"/></svg>
<svg style="left:1860.0px;top:1111.0px" width="20" height="20" viewBox="0 0 24 24"><path d="M7 4V20L18 12Z" fill="#cfcfcf"/></svg>
<svg style="left:1883.0px;top:1111.0px" width="20" height="20" viewBox="0 0 24 24"><path d="M7 5V19L16 12Z" fill="#cfcfcf"/><rect x="17.5" y="4" width="2.5" height="16" fill="#e8832e"/></svg>
<svg style="left:1906.0px;top:1111.0px" width="20" height="20" viewBox="0 0 24 24"><path d="M7 5V19L16 12Z" fill="#cfcfcf"/><rect x="17.5" y="5" width="2.5" height="14" fill="#cfcfcf"/></svg>
<svg style="left:1929.0px;top:1111.0px" width="20" height="20" viewBox="0 0 24 24"><path d="M4 5V19L11 12Z M12 5V19L19 12Z" fill="#cfcfcf"/><rect x="19.5" y="5" width="2.5" height="14" fill="#cfcfcf"/></svg>
<div style="left:2px;top:1155px;width:1959px;height:2px;background:#363636;"></div>
<svg style="left:4px;top:1160px;" width="4" height="30" viewBox="0 0 4 30"><g fill="#6a6a6a"><rect x="0" y="0" width="1" height="1"/><rect x="3" y="0" width="1" height="1"/><rect x="0" y="3" width="1" height="1"/><rect x="3" y="3" width="1" height="1"/><rect x="0" y="6" width="1" height="1"/><rect x="3" y="6" width="1" height="1"/><rect x="0" y="9" width="1" height="1"/><rect x="3" y="9" width="1" height="1"/><rect x="0" y="12" width="1" height="1"/><rect x="3" y="12" width="1" height="1"/><rect x="0" y="15" width="1" height="1"/><rect x="3" y="15" width="1" height="1"/><rect x="0" y="18" width="1" height="1"/><rect x="3" y="18" width="1" height="1"/><rect x="0" y="21" width="1" height="1"/><rect x="3" y="21" width="1" height="1"/><rect x="0" y="24" width="1" height="1"/><rect x="3" y="24" width="1" height="1"/><rect x="0" y="27" width="1" height="1"/><rect x="3" y="27" width="1" height="1"/></g></svg>
<div style="left:15px;top:1162px;width:88px;height:27px;background:#2b2b2b;border-radius:3px"></div>
<div class="t" style="left:20px;top:1169px;font-size:13px;color:#d0d0d0;">1</div>
<div style="left:111px;top:1162px;width:88px;height:27px;background:#2b2b2b;border-radius:3px"></div>
<div class="t" style="left:116px;top:1169px;font-size:13px;color:#d0d0d0;">1</div>
<div style="left:206px;top:1162px;width:949px;height:27px;background:#383838;"></div>
<div style="left:210px;top:1164px;width:577px;height:22px;background:#5d5d5d;border-radius:3px"></div>
<div style="left:215px;top:1167px;width:16px;height:16px;background:#8c8c8c;border-radius:3px"></div>
<div class="t" style="left:236px;top:1169px;font-size:13px;color:#d0d0d0;">1</div>
<div class="t" style="left:741px;top:1169px;font-size:13px;color:#d0d0d0;">120</div>
<div style="left:766px;top:1167px;width:16px;height:16px;background:#8c8c8c;border-radius:3px"></div>
<div style="left:1163px;top:1162px;width:90px;height:27px;background:#2b2b2b;border-radius:3px"></div>
<div class="t" style="left:1170px;top:1169px;font-size:13px;color:#d0d0d0;">120</div>
<div style="left:1261px;top:1162px;width:88px;height:27px;background:#2b2b2b;border-radius:3px"></div>
<div class="t" style="left:1267px;top:1169px;font-size:13px;color:#d0d0d0;">200</div>
<svg style="left:1353px;top:1164px;" width="3" height="22" viewBox="0 0 3 22"><rect x="1" y="0" width="1" height="22" fill="#999"/><rect x="0" y="6" width="3" height="11" fill="#999"/></svg>
<svg style="left:1367.0px;top:1165.0px" width="20" height="20" viewBox="0 0 24 24"><path d="M5 3H14V21L9.5 16L5 21Z" fill="#e8733a"/><path d="M14 2V10M10 6H18" stroke="#e0e0e0" stroke-width="2.2"/></svg>
<svg style="left:1397px;top:1164px;" width="3" height="22" viewBox="0 0 3 22"><rect x="1" y="0" width="1" height="22" fill="#999"/><rect x="0" y="6" width="3" height="11" fill="#999"/></svg>
<svg style="left:1413px;top:1172px;" width="10" height="6" viewBox="0 0 10 6"><path d="M0.5 0.5H9.5L5 5.5Z" fill="none" stroke="#999" stroke-width="1"/></svg>
<div style="left:1431px;top:1163px;width:101px;height:26px;background:transparent;border:1px solid #555;border-radius:3px;box-sizing:border-box"></div>
<div class="t" style="left:1436px;top:1169px;font-size:12px;color:#d4d4d4;">无角色集</div>
<svg style="left:1542px;top:1172px;" width="10" height="6" viewBox="0 0 10 6"><path d="M0.5 0.5H9.5L5 5.5Z" fill="none" stroke="#999" stroke-width="1"/></svg>
<div style="left:1559px;top:1163px;width:101px;height:26px;background:transparent;border:1px solid #555;border-radius:3px;box-sizing:border-box"></div>
<div class="t" style="left:1565px;top:1169px;font-size:12px;color:#d4d4d4;">无动画层</div>
<svg style="left:1670px;top:1164px;" width="3" height="22" viewBox="0 0 3 22"><rect x="1" y="0" width="1" height="22" fill="#999"/><rect x="0" y="6" width="3" height="11" fill="#999"/></svg>
<div style="left:1685px;top:1164px;width:103px;height:22px;background:#5d5d5d;border-radius:3px"></div>
<div style="left:1767px;top:1164px;width:1px;height:22px;background:#4d4d4d;"></div>
<div class="t" style="left:1688px;top:1169px;font-size:13px;color:#d8d8d8;">24 fps</div>
<svg style="left:1773px;top:1172px;" width="10" height="6" viewBox="0 0 10 6"><path d="M0 0H10L5 6Z" fill="#cfcfcf"/></svg>
<svg style="left:1799.0px;top:1163.0px" width="20" height="20" viewBox="0 0 24 24"><path d="M4 13V10A3 3 0 0 1 7 7H17M20 11V14A3 3 0 0 1 17 17H7" stroke="#cfcfcf" stroke-width="2" fill="none"/><path d="M15 4L19 7L15 10Z M9 14L5 17L9 20Z" fill="#cfcfcf"/></svg>
<div style="left:1828px;top:1163px;width:23px;height:25px;background:#5285a6;"></div>
<svg style="left:1829.0px;top:1165.0px" width="20" height="20" viewBox="0 0 24 24"><rect x="3" y="8" width="17" height="12" fill="none" stroke="#ddd" stroke-width="1.5"/><path d="M3 11H20M3 17H20" stroke="#ddd" stroke-width="1"/><rect x="6" y="12" width="4" height="4" fill="#e8832e"/><rect x="12" y="12" width="4" height="4" fill="#e8832e"/><path d="M14 2V9L19 5.5Z" fill="#ddd"/></svg>
<svg style="left:1860px;top:1164px;" width="3" height="22" viewBox="0 0 3 22"><rect x="1" y="0" width="1" height="22" fill="#999"/><rect x="0" y="6" width="3" height="11" fill="#999"/></svg>
<svg style="left:1873.0px;top:1165.0px" width="20" height="20" viewBox="0 0 24 24"><path d="M3 9H7L12 4V20L7 15H3Z" fill="#cfcfcf"/><path d="M15 8Q17 12 15 16M18 6Q21 12 18 18" stroke="#cfcfcf" stroke-width="1.5" fill="none"/></svg>
<svg style="left:1901.0px;top:1165.0px" width="20" height="20" viewBox="0 0 24 24"><path d="M5 8A8.5 8.5 0 1 1 4 15" stroke="#cfcfcf" stroke-width="1.8" fill="none"/><path d="M2 5L6 9L8 4Z" fill="#cfcfcf"/><rect x="11" y="7" width="2.5" height="9" fill="#e8832e"/></svg>
<svg style="left:1929.0px;top:1165.0px" width="20" height="20" viewBox="0 0 24 24"><circle cx="6" cy="5" r="3" fill="none" stroke="#cfcfcf" stroke-width="1.5"/><circle cx="15" cy="7" r="2.5" fill="#e8832e"/><path d="M14 10L11 16L16 18L13 23M12 13L8 15M14 11L19 14M11 16L7 20" stroke="#e8832e" stroke-width="2.2" fill="none"/></svg>
<div style="left:2px;top:1194px;width:1959px;height:2px;background:#363636;"></div>
<svg style="left:4px;top:1198px;" width="4" height="28" viewBox="0 0 4 28"><g fill="#6a6a6a"><rect x="0" y="0" width="1" height="1"/><rect x="3" y="0" width="1" height="1"/><rect x="0" y="3" width="1" height="1"/><rect x="3" y="3" width="1" height="1"/><rect x="0" y="6" width="1" height="1"/><rect x="3" y="6" width="1" height="1"/><rect x="0" y="9" width="1" height="1"/><rect x="3" y="9" width="1" height="1"/><rect x="0" y="12" width="1" height="1"/><rect x="3" y="12" width="1" height="1"/><rect x="0" y="15" width="1" height="1"/><rect x="3" y="15" width="1" height="1"/><rect x="0" y="18" width="1" height="1"/><rect x="3" y="18" width="1" height="1"/><rect x="0" y="21" width="1" height="1"/><rect x="3" y="21" width="1" height="1"/><rect x="0" y="24" width="1" height="1"/><rect x="3" y="24" width="1" height="1"/><rect x="0" y="27" width="1" height="1"/><rect x="3" y="27" width="1" height="1"/></g></svg>
<svg style="left:15px;top:1204px;" width="16" height="16" viewBox="0 0 16 16"><circle cx="8" cy="8" r="8" fill="#7aae3a"/><text x="8" y="13" font-size="12" font-weight="bold" font-family="Liberation Sans" text-anchor="middle" fill="#333">?</text></svg>
<div class="t" style="left:39px;top:1207px;font-size:11px;color:#d8d8d8;">选择工具: 选择一个对象</div>
<svg style="left:838px;top:1211px;" width="15" height="15" viewBox="0 0 15 15"><path d="M0 15L15 0M5 15L15 5M10 15L15 10" stroke="#222" stroke-width="1.5"/></svg>
<div style="left:857px;top:1196px;width:2px;height:31px;background:#363636;"></div>
<svg style="left:862px;top:1200px;" width="4" height="24" viewBox="0 0 4 24"><g fill="#6a6a6a"><rect x="0" y="0" width="1" height="1"/><rect x="3" y="0" width="1" height="1"/><rect x="0" y="3" width="1" height="1"/><rect x="3" y="3" width="1" height="1"/><rect x="0" y="6" width="1" height="1"/><rect x="3" y="6" width="1" height="1"/><rect x="0" y="9" width="1" height="1"/><rect x="3" y="9" width="1" height="1"/><rect x="0" y="12" width="1" height="1"/><rect x="3" y="12" width="1" height="1"/><rect x="0" y="15" width="1" height="1"/><rect x="3" y="15" width="1" height="1"/><rect x="0" y="18" width="1" height="1"/><rect x="3" y="18" width="1" height="1"/><rect x="0" y="21" width="1" height="1"/><rect x="3" y="21" width="1" height="1"/></g></svg>
<div class="t" style="left:881px;top:1205px;font-size:13px;color:#e0e0e0;">MEL</div>
<div style="left:918px;top:1200px;width:288px;height:23px;background:#2b2b2b;border-radius:2px"></div>
<svg style="left:1210px;top:1203px;" width="2" height="16" viewBox="0 0 2 16"><rect x="0" y="2" width="1" height="1" fill="#777"/><rect x="0" y="7" width="1" height="1" fill="#777"/><rect x="0" y="12" width="1" height="1" fill="#777"/></svg>
<div style="left:1215px;top:1200px;width:712px;height:23px;background:#2b2b2b;"></div>
<svg style="left:1933.0px;top:1203.0px" width="18" height="18" viewBox="0 0 24 24"><rect x="3" y="3" width="18" height="18" fill="none" stroke="#ccc" stroke-width="1.5"/><rect x="3" y="3" width="18" height="3" fill="#ccc"/><text x="12" y="18" font-size="9" font-family="Liberation Mono" font-weight="bold" text-anchor="middle" fill="#ccc">{;}</text></svg>
<svg style="left:490.0px;top:159.0px" width="18" height="18" viewBox="0 0 24 24"><rect x="1" y="4" width="22" height="16" fill="#333" stroke="#ccc" stroke-width="1.5"/><path d="M3 6H21M3 18H21" stroke="#ccc" stroke-width="1.5" stroke-dasharray="2 1.5"/></svg>
<svg style="left:510.0px;top:159.0px" width="18" height="18" viewBox="0 0 24 24"><rect x="2" y="4" width="20" height="16" fill="#333" stroke="#ccc" stroke-width="1.5"/><circle cx="12" cy="12" r="4" fill="#5ab4c8"/></svg>
<div style="left:529px;top:159px;width:18px;height:18px;background:#3a3a3a;"></div>
<svg style="left:529.0px;top:159.0px" width="18" height="18" viewBox="0 0 24 24"><rect x="3" y="3" width="18" height="18" fill="#555"/><circle cx="12" cy="12" r="6" fill="#3a3a3a"/></svg>
<svg style="left:548.0px;top:159.0px" width="18" height="18" viewBox="0 0 24 24"><rect x="2" y="4" width="20" height="16" fill="#333" stroke="#ccc" stroke-width="1.5"/><path d="M4 12H20M12 6V18" stroke="#5ab4c8" stroke-width="2" stroke-dasharray="1.5 1.5"/></svg>
<svg style="left:567.0px;top:159.0px" width="18" height="18" viewBox="0 0 24 24"><rect x="2" y="4" width="20" height="16" fill="#333" stroke="#ccc" stroke-width="1.5"/><path d="M5 18L9 12L13 18Z" fill="#5ab4c8"/><circle cx="15" cy="10" r="3.5" fill="#5ab4c8"/></svg>
<svg style="left:586.0px;top:159.0px" width="18" height="18" viewBox="0 0 24 24"><rect x="2" y="4" width="20" height="16" fill="#333" stroke="#ccc" stroke-width="1.5"/><path d="M6 7H18V10H16.5L16 9H13.5V17H15V18H9V17H10.5V9H8L7.5 10H6Z" fill="#5ab4c8"/></svg>
<svg style="left:608px;top:158px;" width="3" height="20" viewBox="0 0 3 20"><rect x="1" y="0" width="1" height="20" fill="#999"/><rect x="0" y="5" width="3" height="10" fill="#999"/></svg>
<svg style="left:616.0px;top:159.0px" width="18" height="18" viewBox="0 0 24 24"><path d="M12 3L21 7.5V16.5L12 21L3 16.5V7.5Z M3 7.5L12 12L21 7.5M12 12V21" stroke="#ccc" stroke-width="1.3" fill="none"/></svg>
<div style="left:635px;top:159px;width:18px;height:18px;background:#5285a6;"></div>
<svg style="left:635.0px;top:159.0px" width="18" height="18" viewBox="0 0 24 24"><path d="M12 3L21 7.5V16.5L12 21L3 16.5V7.5Z" fill="#5ab4c8" stroke="#222" stroke-width="1"/><path d="M3 7.5L12 12L21 7.5M12 12V21" stroke="#222" stroke-width="1" fill="none"/><path d="M12 3L21 7.5L12 12L3 7.5Z" fill="#8fd8e8"/></svg>
<svg style="left:654.0px;top:159.0px" width="18" height="18" viewBox="0 0 24 24"><defs><pattern id="ck" width="4" height="4" patternUnits="userSpaceOnUse"><rect width="2" height="2" fill="#ddd"/><rect x="2" y="2" width="2" height="2" fill="#ddd"/><rect x="2" width="2" height="2" fill="#333"/><rect y="2" width="2" height="2" fill="#333"/></pattern></defs><path d="M12 2A10 10 0 0 0 12 22Z" fill="#ccc"/><path d="M12 2A10 10 0 0 1 12 22Z" fill="url(#ck)"/></svg>
<svg style="left:673.0px;top:159.0px" width="18" height="18" viewBox="0 0 24 24"><path d="M12 3L21 7.5V16.5L12 21L3 16.5V7.5Z M3 7.5L12 12L21 7.5M12 12V21" stroke="#ccc" stroke-width="1.3" fill="none"/><path d="M12 6L18 9V15L12 18L6 15V9Z" fill="#5ab4c8"/></svg>
<svg style="left:692.0px;top:159.0px" width="18" height="18" viewBox="0 0 24 24"><circle cx="12" cy="12" r="10" fill="url(#ck)"/></svg>
<svg style="left:711.0px;top:159.0px" width="18" height="18" viewBox="0 0 24 24"><path d="M8 11A4.5 4.5 0 1 1 16 11L14.5 16H9.5Z" fill="#ccc"/><rect x="10" y="17" width="4" height="3" fill="#ccc"/><path d="M3 8H5M19 8H21M5 3L7 5M19 3L17 5M12 1V3" stroke="#ccc" stroke-width="1.3"/></svg>
<svg style="left:730.0px;top:159.0px" width="18" height="18" viewBox="0 0 24 24"><circle cx="15" cy="10" r="7" fill="#5ab4c8"/><path d="M2 18L9 13L10 18Z" fill="#999"/></svg>
<svg style="left:753px;top:158px;" width="3" height="20" viewBox="0 0 3 20"><rect x="1" y="0" width="1" height="20" fill="#999"/><rect x="0" y="5" width="3" height="10" fill="#999"/></svg>
<svg style="left:760.0px;top:159.0px" width="18" height="18" viewBox="0 0 24 24"><circle cx="12" cy="9" r="7" fill="#ccc"/><path d="M5 14L12 21L20 17" stroke="#5ab4c8" stroke-width="1.5" fill="none"/></svg>
<svg style="left:779.0px;top:159.0px" width="18" height="18" viewBox="0 0 24 24"><circle cx="8" cy="16" r="5" fill="#555"/><circle cx="11" cy="13" r="5" fill="#888"/><circle cx="16" cy="8" r="5" fill="#ccc"/></svg>
<svg style="left:798.0px;top:159.0px" width="18" height="18" viewBox="0 0 24 24"><circle cx="12" cy="12" r="7" fill="none" stroke="#5ab4c8" stroke-width="2.5" stroke-dasharray="7 2"/></svg>
<div style="left:817px;top:159px;width:18px;height:18px;background:#3a3a3a;"></div>
<svg style="left:817.0px;top:159.0px" width="18" height="18" viewBox="0 0 24 24"><rect x="4" y="4" width="11" height="11" fill="#3f5050"/><rect x="9" y="9" width="11" height="11" fill="#4a6060"/></svg>
<svg style="left:840px;top:158px;" width="3" height="20" viewBox="0 0 3 20"><rect x="1" y="0" width="1" height="20" fill="#999"/><rect x="0" y="5" width="3" height="10" fill="#999"/></svg>
<svg style="left:847.0px;top:159.0px" width="18" height="18" viewBox="0 0 24 24"><rect x="3" y="3" width="11" height="11" fill="none" stroke="#5ab4c8" stroke-width="1.3" stroke-dasharray="2 1.5"/><path d="M11 9L11 22L14 19L17 23L19 22L16 18H20Z" fill="#ccc"/></svg>
<svg style="left:869px;top:158px;" width="3" height="20" viewBox="0 0 3 20"><rect x="1" y="0" width="1" height="20" fill="#999"/><rect x="0" y="5" width="3" height="10" fill="#999"/></svg>
<svg style="left:877.0px;top:159.0px" width="18" height="18" viewBox="0 0 24 24"><rect x="3" y="3" width="18" height="18" fill="#3a3a3a"/><rect x="9" y="5" width="9" height="9" fill="#ccc" stroke="#222"/><rect x="5" y="10" width="9" height="9" fill="#ccc" stroke="#222"/></svg>
<svg style="left:896.0px;top:159.0px" width="18" height="18" viewBox="0 0 24 24"><rect x="3" y="3" width="18" height="18" fill="#3a3a3a"/><rect x="9" y="5" width="9" height="9" fill="none" stroke="#ccc" stroke-width="1.5"/><rect x="5" y="10" width="9" height="9" fill="#ccc" stroke="#222"/></svg>
<svg style="left:915.0px;top:159.0px" width="18" height="18" viewBox="0 0 24 24"><rect x="3" y="3" width="18" height="18" fill="#3a3a3a" stroke="#ccc" stroke-width="1.5"/><path d="M7 7L17 17" stroke="#ccc" stroke-width="2"/></svg>
<svg style="left:937px;top:158px;" width="3" height="20" viewBox="0 0 3 20"><rect x="1" y="0" width="1" height="20" fill="#999"/><rect x="0" y="5" width="3" height="10" fill="#999"/></svg>
<svg style="left:946.0px;top:159.0px" width="18" height="18" viewBox="0 0 24 24"><circle cx="12" cy="12" r="9" fill="#ccc"/><path d="M12 3L14 10L20 8M21 14L14 13L12 20M4 16L10 13L6 7" stroke="#444" stroke-width="1.8" fill="none"/></svg>
<div style="left:967px;top:160px;width:37px;height:14px;background:#2b2b2b;border-radius:2px"></div>
<div class="t" style="left:970px;top:161px;font-size:13px;color:#d8d8d8;">0.00</div>
<svg style="left:1007.0px;top:159.0px" width="18" height="18" viewBox="0 0 24 24"><path d="M12 4A8 8 0 0 0 12 20Z" fill="#ccc"/><rect x="13" y="4" width="4" height="16" fill="#ccc"/></svg>
<div style="left:1027px;top:160px;width:38px;height:14px;background:#2b2b2b;border-radius:2px"></div>
<div class="t" style="left:1031px;top:161px;font-size:13px;color:#d8d8d8;">1.00</div>
<div style="left:1068px;top:159px;width:18px;height:18px;background:#5285a6;"></div>
<svg style="left:1068.0px;top:159.0px" width="18" height="18" viewBox="0 0 24 24"><circle cx="12" cy="12" r="8.5" fill="#5ab4c8" stroke="#222" stroke-width="1"/><text x="12" y="15" font-size="7" font-weight="bold" font-family="Liberation Sans" text-anchor="middle" fill="#1a3a45">ON</text></svg>
<div style="left:1089px;top:159px;width:220px;height:17px;background:#5a5a5a;border-radius:2px"></div>
<div style="left:1288px;top:159px;width:1px;height:17px;background:#4a4a4a;"></div>
<div class="t" style="left:1092px;top:161px;font-size:12.2px;color:#d8d8d8;">ACES 1.0 SDR-video (sRGB)</div>
<svg style="left:1294px;top:165px;" width="10" height="6" viewBox="0 0 10 6"><path d="M0 0H10L5 6Z" fill="#cfcfcf"/></svg>
<svg style="left:0px;top:0px;" width="1961" height="1229" viewBox="0 0 1961 1229"><defs><linearGradient id="cg1" x1="0" y1="0" x2="0" y2="1"><stop offset="0" stop-color="#b2b2b2"/><stop offset="1" stop-color="#9a9a9a"/></linearGradient></defs><path d="M1614.3 204.7L1646.8 215L1644.4 254.5L1614.6 273.2L1584.5 254.5L1581.8 215Z" fill="url(#cg1)" stroke="#7a7a7a" stroke-width="1"/><path d="M1614.3 204.7L1646.8 215L1614.6 228.2L1581.8 215Z" fill="#b4b4b4"/><path d="M1581.8 215L1614.6 228.2L1646.8 215M1614.6 228.2V273.2" stroke="#6a6a6a" stroke-width="2.2" fill="none"/><g font-family="Liberation Serif,serif" fill="#5a5a5a" font-size="26"><text transform="matrix(0.82 0.33 0.0675 0.9875 1581.8 215)" x="7" y="31">前</text><text transform="matrix(0.805 -0.33 0.0375 1.05 1614.6 228.2)" x="7" y="30">右</text><text transform="matrix(0.82 0.33 -0.8125 0.2575 1614.3 204.7)" x="9" y="31" font-size="23">上</text></g></svg>
<svg style="left:0px;top:0px;" width="1961" height="1229" viewBox="0 0 1961 1229"><path d="M342.5 1059V1071.5" stroke="#00f000" stroke-width="1.3"/><path d="M342.5 1071.5L334.5 1075" stroke="#0000ff" stroke-width="1.2"/><path d="M342.5 1071.5L350.5 1075" stroke="#ff0000" stroke-width="1.2"/><text x="342.5" y="1056.5" font-size="8.5" font-weight="bold" font-family="Liberation Sans" text-anchor="middle" fill="#00f000">y</text><text x="331.5" y="1075" font-size="8.5" font-weight="bold" font-family="Liberation Sans" text-anchor="middle" fill="#0000ff">z</text><text x="353" y="1075" font-size="8.5" font-weight="bold" font-family="Liberation Sans" text-anchor="middle" fill="#ff0000">x</text></svg>
<div style="left:1938px;top:132px;width:23px;height:969px;background:#3b3b3b;"></div>
<div style="left:1938px;top:133px;width:23px;height:111px;background:#444444;border-radius:0 4px 4px 0"></div>
<div style="left:1941px;top:245px;width:20px;height:83px;background:#3a3a3a;border-radius:0 4px 4px 0;border:1px solid #333;border-left:none;box-sizing:border-box"></div>
<div style="left:1941px;top:331px;width:20px;height:81px;background:#3a3a3a;border-radius:0 4px 4px 0;border:1px solid #333;border-left:none;box-sizing:border-box"></div>
<div class="t" style="left:1958px;top:143px;font-size:12.5px;color:#e8e8e8;transform:rotate(90deg);transform-origin:0 0;">通道盒/层编辑器</div>
<div class="t" style="left:1958px;top:259px;font-size:12.5px;color:#a8a8a8;transform:rotate(90deg);transform-origin:0 0;">属性编辑器</div>
<div class="t" style="left:1958px;top:344px;font-size:12.5px;color:#a8a8a8;transform:rotate(90deg);transform-origin:0 0;">建模工具包</div>
<svg style="left:1878.0px;top:135.0px" width="16" height="16" viewBox="0 0 24 24"><path d="M12 2L15 7H9Z" fill="#7cb342"/><path d="M3 21L6 15L9 20Z" fill="#3a7be0"/><path d="M21 21L18 15L15 20Z" fill="#e04040"/><path d="M12 8V14M12 14L8 17M12 14L16 17" stroke="#ccc" stroke-width="1.5"/></svg>
<svg style="left:1899.0px;top:135.0px" width="16" height="16" viewBox="0 0 24 24"><circle cx="12" cy="12" r="9" fill="none" stroke="#5ab4c8" stroke-width="5"/><path d="M12 12L21 12A9 9 0 0 1 16 20Z" fill="#888"/></svg>
<svg style="left:1920.0px;top:135.0px" width="16" height="16" viewBox="0 0 24 24"><path d="M3 3V21H21" stroke="#888" stroke-width="1.5" fill="none"/><path d="M6 18L20 4M14 4H20V10" stroke="#5ab4c8" stroke-width="2" fill="none"/></svg>
<svg style="left:1767px;top:812px;" width="85" height="2" viewBox="0 0 85 2"><rect x="0" y="0" width="1" height="1" fill="#777"/><rect x="3" y="0" width="1" height="1" fill="#777"/><rect x="6" y="0" width="1" height="1" fill="#777"/><rect x="9" y="0" width="1" height="1" fill="#777"/><rect x="12" y="0" width="1" height="1" fill="#777"/><rect x="15" y="0" width="1" height="1" fill="#777"/><rect x="18" y="0" width="1" height="1" fill="#777"/><rect x="21" y="0" width="1" height="1" fill="#777"/><rect x="24" y="0" width="1" height="1" fill="#777"/><rect x="27" y="0" width="1" height="1" fill="#777"/><rect x="30" y="0" width="1" height="1" fill="#777"/><rect x="33" y="0" width="1" height="1" fill="#777"/><rect x="36" y="0" width="1" height="1" fill="#777"/><rect x="39" y="0" width="1" height="1" fill="#777"/><rect x="42" y="0" width="1" height="1" fill="#777"/><rect x="45" y="0" width="1" height="1" fill="#777"/><rect x="48" y="0" width="1" height="1" fill="#777"/><rect x="51" y="0" width="1" height="1" fill="#777"/><rect x="54" y="0" width="1" height="1" fill="#777"/><rect x="57" y="0" width="1" height="1" fill="#777"/><rect x="60" y="0" width="1" height="1" fill="#777"/><rect x="63" y="0" width="1" height="1" fill="#777"/><rect x="66" y="0" width="1" height="1" fill="#777"/><rect x="69" y="0" width="1" height="1" fill="#777"/><rect x="72" y="0" width="1" height="1" fill="#777"/><rect x="75" y="0" width="1" height="1" fill="#777"/><rect x="78" y="0" width="1" height="1" fill="#777"/><rect x="81" y="0" width="1" height="1" fill="#777"/><rect x="84" y="0" width="1" height="1" fill="#777"/></svg>
<div style="left:1683px;top:822px;width:255px;height:275px;background:#383838;border:1px solid #323232;box-sizing:border-box"></div>
<div style="left:1684px;top:824px;width:45px;height:18px;background:#444444;border-radius:3px 3px 0 0"></div>
<div style="left:1731px;top:824px;width:45px;height:18px;background:#3a3a3a;border-radius:3px 3px 0 0;border:1px solid #333;box-sizing:border-box"></div>
<div class="t" style="left:1693px;top:827px;font-size:12px;color:#e0e0e0;">显示</div>
<div class="t" style="left:1741px;top:827px;font-size:12px;color:#a8a8a8;">动画</div>
<div style="left:1684px;top:842px;width:253px;height:253px;background:#444444;"></div>
<div class="t" style="left:1693px;top:849px;font-size:12px;color:#d0d0d0;">层</div>
<div class="t" style="left:1720px;top:849px;font-size:12px;color:#d0d0d0;">选项</div>
<div class="t" style="left:1759px;top:849px;font-size:12px;color:#d0d0d0;">帮助</div>
<svg style="left:1837.5px;top:867.5px" width="21" height="21" viewBox="0 0 24 24"><path d="M1 13L9 8.5L14 13L6 18Z" fill="#c8c8c8"/><path d="M13 12V19M10 15L13 11L16 15" stroke="#4ab0c8" stroke-width="2.2" fill="none"/></svg>
<svg style="left:1860.5px;top:867.5px" width="21" height="21" viewBox="0 0 24 24"><path d="M1 13L9 8.5L14 13L6 18Z" fill="#c8c8c8"/><path d="M13 11V18M10 15L13 19L16 15" stroke="#4ab0c8" stroke-width="2.2" fill="none"/></svg>
<svg style="left:1886.5px;top:867.5px" width="21" height="21" viewBox="0 0 24 24"><path d="M1 13L9 8.5L14 13L6 18Z" fill="#c8c8c8"/><path d="M15 5V13M11 9H19" stroke="#4ab0c8" stroke-width="2.2"/></svg>
<svg style="left:1910.5px;top:867.5px" width="21" height="21" viewBox="0 0 24 24"><path d="M1 13L9 8.5L14 13L6 18Z" fill="#c8c8c8"/><circle cx="15" cy="9" r="3.5" fill="#4ab0c8"/></svg>
<div style="left:1686px;top:893px;width:247px;height:200px;background:#2a2a2a;"></div>
<div style="left:1699px;top:1082px;width:154px;height:9px;background:#5a5a5a;border-radius:5px"></div>
<svg style="left:1688px;top:1082px;" width="6" height="9" viewBox="0 0 6 9"><path d="M6 0V9L0 4.5Z" fill="#bbb"/></svg>
<svg style="left:1923px;top:1082px;" width="6" height="9" viewBox="0 0 6 9"><path d="M0 0V9L6 4.5Z" fill="#bbb"/></svg>
<div style="left:1676px;top:1097px;width:262px;height:4px;background:#444444;"></div>
<div style="left:30px;top:74px;width:60px;height:60px;border-radius:50%;background:rgba(40,150,210,0.33)"></div>
<div style="left:40.5px;top:84.5px;width:33px;height:33px;border-radius:50%;border:3px solid #2fb1ea;background:#3d3d3d"></div>
<svg style="left:45.5px;top:89.5px" width="29" height="29" viewBox="0 0 24 24"><circle cx="12" cy="12" r="9.5" fill="#e69a4d"/><path d="M2.5 12A9.5 3 0 0 0 21.5 12M3.5 8A9 3 0 0 0 20.5 8M3.5 16A9 3 0 0 0 20.5 16M12 2.5L6 17M12 2.5L18 17M12 2.5C5 8 5 17 12 21.5M12 2.5C19 8 19 17 12 21.5" stroke="#444" stroke-width="0.8" fill="none"/></svg>
<div style="left:78px;top:122px;width:416px;height:363px;background:#4a4a4a;box-shadow:4px 6px 14px rgba(0,0,0,0.45)"></div>
<svg style="left:475px;top:129px;" width="12" height="12" viewBox="0 0 12 12"><path d="M1 1L11 11M11 1L1 11" stroke="#d0d0d0" stroke-width="1.2"/></svg>
<div class="t" style="left:93px;top:150px;font-size:15px;color:#f4f4f4;font-weight:bold">创建多边形对象</div>
<div style="left:94px;top:176px;width:384px;height:160px;background:#444444;"></div>
<div style="left:98px;top:177px;width:10px;height:30px;background:#333333;"></div>
<svg style="left:94px;top:177px;" width="1" height="30" viewBox="0 0 1 30"><rect x="0" y="0" width="1" height="1" fill="#777"/><rect x="0" y="3" width="1" height="1" fill="#777"/><rect x="0" y="6" width="1" height="1" fill="#777"/><rect x="0" y="9" width="1" height="1" fill="#777"/><rect x="0" y="12" width="1" height="1" fill="#777"/><rect x="0" y="15" width="1" height="1" fill="#777"/><rect x="0" y="18" width="1" height="1" fill="#777"/><rect x="0" y="21" width="1" height="1" fill="#777"/><rect x="0" y="24" width="1" height="1" fill="#777"/><rect x="0" y="27" width="1" height="1" fill="#777"/></svg>
<div style="left:100px;top:182px;width:5px;height:1px;background:#aaa;"></div>
<svg style="left:100px;top:195px;" width="6" height="6" viewBox="0 0 6 6"><circle cx="3" cy="3" r="2" fill="none" stroke="#aaa" stroke-width="1"/></svg>
<div style="left:110px;top:178px;width:354px;height:8px;background:#363636;"></div>
<div style="left:110px;top:178px;width:54px;height:8px;background:#3c3c3c;"></div>
<div class="t" style="left:110px;top:179px;width:55px;text-align:center;font-size:6.3px;letter-spacing:-0.1px;color:#9a9a9a">Curves / Surfaces</div>
<div style="left:165px;top:178px;width:48px;height:8px;background:#474747;"></div>
<div class="t" style="left:165px;top:179px;width:49px;text-align:center;font-size:6.3px;letter-spacing:-0.1px;color:#e0e0e0">Poly Modeling</div>
<div style="left:214px;top:178px;width:36px;height:8px;background:#3c3c3c;"></div>
<div class="t" style="left:214px;top:179px;width:37px;text-align:center;font-size:6.3px;letter-spacing:-0.1px;color:#9a9a9a">Sculpting</div>
<div style="left:252px;top:178px;width:30px;height:8px;background:#3c3c3c;"></div>
<div class="t" style="left:252px;top:179px;width:31px;text-align:center;font-size:6.3px;letter-spacing:-0.1px;color:#9a9a9a">Rigging</div>
<div style="left:284px;top:178px;width:36px;height:8px;background:#3c3c3c;"></div>
<div class="t" style="left:284px;top:179px;width:37px;text-align:center;font-size:6.3px;letter-spacing:-0.1px;color:#9a9a9a">Animation</div>
<div style="left:322px;top:178px;width:37px;height:8px;background:#3c3c3c;"></div>
<div class="t" style="left:322px;top:179px;width:38px;text-align:center;font-size:6.3px;letter-spacing:-0.1px;color:#9a9a9a">Rendering</div>
<div style="left:361px;top:178px;width:16px;height:8px;background:#3c3c3c;"></div>
<div class="t" style="left:361px;top:179px;width:17px;text-align:center;font-size:6.3px;letter-spacing:-0.1px;color:#9a9a9a">FX</div>
<div style="left:379px;top:178px;width:38px;height:8px;background:#3c3c3c;"></div>
<div class="t" style="left:379px;top:179px;width:39px;text-align:center;font-size:6.3px;letter-spacing:-0.1px;color:#9a9a9a">FX Caching</div>
<div style="left:419px;top:178px;width:30px;height:8px;background:#3c3c3c;"></div>
<div class="t" style="left:419px;top:179px;width:31px;text-align:center;font-size:6.3px;letter-spacing:-0.1px;color:#9a9a9a">Custom</div>
<div style="left:451px;top:178px;width:11px;height:8px;background:#3c3c3c;"></div>
<div class="t" style="left:451px;top:179px;width:12px;text-align:center;font-size:6.3px;letter-spacing:-0.1px;color:#9a9a9a">Ar</div>
<svg style="left:465px;top:179px;" width="12" height="6" viewBox="0 0 12 6"><path d="M3 0V6L0 3Z" fill="#777"/><path d="M9 0V6L12 3Z" fill="#ccc"/></svg>
<svg style="left:94px;top:176px;overflow:hidden" width="384" height="32" viewBox="94 176 384 32"><svg x="108" y="186" width="361" height="21" viewBox="108 186 361 21" style="overflow:hidden"><g transform="translate(120.6 196.5) scale(0.5) translate(-60 -104)"><g transform="translate(79.5,89.0) scale(1.25)"><path d="M12 1.5L21.5 6.5V17.5L12 22.5L2.5 17.5V6.5Z" fill="#e69a4d"/><path d="M12 1.5L21.5 6.5V17.5L12 22.5L2.5 17.5V6.5Z M2.5 6.5L12 11.5L21.5 6.5M12 11.5V22.5M7.25 4L16.75 9M16.75 4L7.25 9M7.25 9V20M2.5 12L12 17M16.75 9V20M21.5 12L12 17" stroke="#3a3a3a" stroke-width="0.9" fill="none"/></g><g transform="translate(115.0,89.0) scale(1.25)"><path d="M3 6A9 3.8 0 0 1 21 6V18A9 3.8 0 0 1 3 18Z" fill="#e69a4d"/><path d="M3 6A9 3.8 0 0 1 21 6V18A9 3.8 0 0 1 3 18Z M3 6A9 3.8 0 0 0 21 6M3 10A9 3.8 0 0 0 21 10M3 14A9 3.8 0 0 0 21 14M12 9.8V21.8M12 2.2V9.8M5.5 3.3L18.5 8.7M18.5 3.3L5.5 8.7M6 9.3V21M18 9.3V21" stroke="#3a3a3a" stroke-width="0.9" fill="none"/></g><g transform="translate(149.5,89.0) scale(1.25)"><path d="M12 1.5L3 19A9 3.5 0 0 0 21 19Z" fill="#e69a4d"/><path d="M12 1.5L3 19A9 3.5 0 0 0 21 19Z M12 1.5V22.5M6.3 12.5A6 2.5 0 0 0 17.7 12.5" stroke="#3a3a3a" stroke-width="0.9" fill="none"/></g><g transform="translate(185.0,89.0) scale(1.25)"><g transform="rotate(-25 12 12)"><ellipse cx="12" cy="12" rx="8" ry="10.5" fill="#e69a4d"/><ellipse cx="12" cy="12" rx="1.6" ry="5.5" fill="#444"/><path d="M12 12m-8 0a8 10.5 0 1 0 16 0a8 10.5 0 1 0 -16 0M5 6L10.5 8.5M19 6L13.5 8.5M5 18L10.5 15.5M19 18L13.5 15.5" stroke="#3a3a3a" stroke-width="0.9" fill="none"/><ellipse cx="12" cy="12" rx="1.6" ry="5.5" stroke="#3a3a3a" stroke-width="0.9" fill="none"/></g></g><g transform="translate(219.8,89.0) scale(1.25)"><path d="M12 1.5L22.5 12L12 22.5L1.5 12Z" fill="#e69a4d"/><path d="M12 1.5L22.5 12L12 22.5L1.5 12Z M6.75 6.75L17.25 17.25M17.25 6.75L6.75 17.25" stroke="#3a3a3a" stroke-width="0.9" fill="none"/></g><g transform="translate(255.0,89.0) scale(1.25)"><ellipse cx="12" cy="12" rx="9.5" ry="6.2" fill="#e69a4d"/><ellipse cx="12" cy="12" rx="9.5" ry="6.2" stroke="#3a3a3a" stroke-width="0.9" fill="none"/><path d="M6 7L18 17M18 7L6 17" stroke="#3a3a3a" stroke-width="0.9" fill="none"/><path d="M2.5 12H21.5" stroke="#9a6a3a" stroke-width="1.4"/></g><rect x="293" y="87" width="2" height="34" fill="#9a9a9a"/><polygon points="317.5,91.2 328.6,97.6 328.6,110.4 317.5,116.8 306.4,110.4 306.4,97.6" fill="#e69a4d" stroke="#2e2e2e" stroke-width="0.9"/><path d="M317.5 97L324.5 109L310.5 109Z M317.5 91.2L317.5 97M328.6 97.6L317.5 97L306.4 97.6L310.5 109L306.4 110.4M317.5 116.8L310.5 109M317.5 116.8L324.5 109L328.6 110.4M324.5 109L328.6 97.6" stroke="#2e2e2e" stroke-width="0.8" fill="none"/><path d="M331 116.5H325L331 110.5Z" fill="#c8c8c8"/><path d="M364 90.6Q366 102 377.7 104Q366 106 364 117Q362 106 350.4 104Q362 102 364 90.6Z" fill="#e69a4d" stroke="#2e2e2e" stroke-width="0.6"/><path d="M378 116.5H372L378 110.5Z" fill="#c8c8c8"/><rect x="503.5" y="91.8" width="25" height="24.4" fill="#5ab4c8" stroke="#2e2e2e" stroke-width="0.8"/><rect x="503.5" y="91.8" width="25" height="3.4" fill="#d0d0d0"/><path d="M505.5 93.5H507M508.5 93.5H510M511.5 93.5H513" stroke="#333" stroke-width="1.6"/><rect x="505.6" y="97.8" width="20.8" height="16.2" fill="#333"/><rect x="507.3" y="99.6" width="4.8" height="5" fill="#d0d0d0"/><rect x="507.3" y="106.5" width="4.8" height="5" fill="#d0d0d0"/><rect x="513.9" y="99.6" width="4.8" height="5" fill="#d0d0d0"/><rect x="513.9" y="106.5" width="4.8" height="5" fill="#d0d0d0"/><rect x="520.5" y="99.6" width="4.8" height="5" fill="#d0d0d0"/><rect x="520.5" y="106.5" width="4.8" height="5" fill="#d0d0d0"/><circle cx="563" cy="105" r="5.6" fill="none" stroke="#c8c8c8" stroke-width="1.3"/><circle cx="563" cy="105" r="2.4" fill="#c8c8c8"/><path d="M563 90V98M551.5 113L557.5 109M574.5 113L568.5 109" stroke="#5ab4c8" stroke-width="1.6"/><circle cx="592" cy="97.3" r="6.8" fill="#5ab4c8"/><path d="M591.5 93.5V97.8H595" stroke="#333" stroke-width="1.2" fill="none"/><path d="M598 103.5H606M593 108H596.5M598 108H606M593 112.5H596.5M598 112.5H600" stroke="#5ab4c8" stroke-width="1.1"/><path d="M601.5 109.5L608.5 116.5M608.5 109.5L601.5 116.5" stroke="#ddd" stroke-width="1.8"/><rect x="618" y="104.5" width="30" height="12.5" fill="#3a3a3a"/><g stroke="#d0d0d0" stroke-width="1.1"><path d="M633.4 89V104M627 92.5L639.8 100.5M639.8 92.5L627 100.5"/><path d="M630.8 89.8L633.4 92.2L636 89.8M630.8 102.5L633.4 100.2L636 102.5M627.2 95.2L629 96.5L627 98.2M639.6 95.2L637.8 96.5L639.8 98.2" fill="none"/></g><text x="633" y="115.8" font-size="11.5" font-weight="bold" font-family="Liberation Sans" text-anchor="middle" fill="#5ab4c8" textLength="27">0,0,0</text><rect x="340" y="87" width="2" height="34" fill="#9a9a9a"/><g transform="translate(384.0,89.0) scale(1.25)"><path d="M3 6C6 2 17 4 20.5 8.5C22 11 7 9.5 3.5 12.5C1.5 15 18 14 20.5 17C22 19.5 16 21 13 21" stroke="#2e2e2e" stroke-width="4.4" fill="none"/><path d="M3 6C6 2 17 4 20.5 8.5C22 11 7 9.5 3.5 12.5C1.5 15 18 14 20.5 17C22 19.5 16 21 13 21" stroke="#e69a4d" stroke-width="3" fill="none"/><path d="M9 8.5V11.5M14 8.7V11.7M8 13V16M13 13.5V16.5M9.5 4V7M14 4.5V7.5M10 18V21" stroke="#2e2e2e" stroke-width="0.6"/><path d="M8 3.5L12 2M9 22.5L13 21" stroke="#ccc" stroke-width="1.2"/></g><g transform="translate(419.0,89.0) scale(1.25)"><path d="M3.5 3.5H20.5V9H19.5Q19 6 16 6H13.8V19.5Q13.8 20.5 15.5 20.5H16.5V21.5H7.5V20.5H8.5Q10.2 20.5 10.2 19.5V6H8Q5 6 4.5 9H3.5Z" fill="#e69a4d" stroke="#2e2e2e" stroke-width="0.6"/></g><g transform="translate(454.0,89.0) scale(1.25)"><rect x="3" y="3" width="18" height="18" fill="#e69a4d" stroke="#2e2e2e" stroke-width="0.6"/><text x="12" y="15" font-size="9" font-weight="bold" font-family="Liberation Sans" text-anchor="middle" fill="#333">svg</text></g><rect x="492" y="87" width="2" height="34" fill="#9a9a9a"/><rect x="539" y="87" width="2" height="34" fill="#9a9a9a"/><rect x="656" y="87" width="2" height="34" fill="#9a9a9a"/><circle cx="680" cy="104" r="11.8" fill="none" stroke="#c8c8c8" stroke-width="1.1"/><path d="M670 101L680 96L690 101L680 106Z" fill="#e69a4d" stroke="#2e2e2e" stroke-width="0.6"/><path d="M670 107L680 102L690 107L680 112Z" fill="#e69a4d" stroke="#2e2e2e" stroke-width="0.6"/><rect x="707.2" y="92.9" width="8.5" height="8.9" fill="#cfcfcf" stroke="#2e2e2e" stroke-width="0.8"/><rect x="717" y="92.9" width="9" height="8.9" fill="#cfcfcf" stroke="#2e2e2e" stroke-width="0.8"/><rect x="717" y="103" width="9" height="9" fill="#cfcfcf" stroke="#2e2e2e" stroke-width="0.8"/><rect x="704" y="106" width="9" height="9" fill="#e69a4d" stroke="#2e2e2e" stroke-width="0.8"/><path d="M736 97L741.5 94.5L747 97V110.5L741.5 113L736 110.5Z" fill="#e69a4d" stroke="#2e2e2e" stroke-width="0.7"/><path d="M736 97L741.5 99.5L747 97M741.5 99.5V113" stroke="#2e2e2e" stroke-width="0.7" fill="none"/><path d="M752 97L757.5 94.5L763 97V110.5L757.5 113L752 110.5Z" fill="#e69a4d" stroke="#2e2e2e" stroke-width="0.7"/><path d="M752 97L757.5 99.5L763 97M757.5 99.5V113" stroke="#2e2e2e" stroke-width="0.7" fill="none"/><path d="M749.5 91V117" stroke="#ddd" stroke-width="1" stroke-dasharray="2.2 1.3"/><rect x="772.8" y="99.8" width="7" height="7" fill="#cfcfcf" stroke="#2e2e2e" stroke-width="0.8"/><rect x="772.8" y="107.8" width="7" height="7" fill="#cfcfcf" stroke="#2e2e2e" stroke-width="0.8"/><rect x="780.8" y="107.8" width="7" height="7" fill="#cfcfcf" stroke="#2e2e2e" stroke-width="0.8"/><rect x="780.5" y="91.6" width="16" height="16" fill="#2e2e2e"/><rect x="781.00" y="92.10" width="3.2" height="3.2" fill="#e69a4d"/><rect x="781.00" y="96.10" width="3.2" height="3.2" fill="#e69a4d"/><rect x="781.00" y="100.10" width="3.2" height="3.2" fill="#e69a4d"/><rect x="781.00" y="104.10" width="3.2" height="3.2" fill="#e69a4d"/><rect x="785.00" y="92.10" width="3.2" height="3.2" fill="#e69a4d"/><rect x="785.00" y="96.10" width="3.2" height="3.2" fill="#e69a4d"/><rect x="785.00" y="100.10" width="3.2" height="3.2" fill="#e69a4d"/><rect x="785.00" y="104.10" width="3.2" height="3.2" fill="#e69a4d"/><rect x="789.00" y="92.10" width="3.2" height="3.2" fill="#e69a4d"/><rect x="789.00" y="96.10" width="3.2" height="3.2" fill="#e69a4d"/><rect x="789.00" y="100.10" width="3.2" height="3.2" fill="#e69a4d"/><rect x="789.00" y="104.10" width="3.2" height="3.2" fill="#e69a4d"/><rect x="793.00" y="92.10" width="3.2" height="3.2" fill="#e69a4d"/><rect x="793.00" y="96.10" width="3.2" height="3.2" fill="#e69a4d"/><rect x="793.00" y="100.10" width="3.2" height="3.2" fill="#e69a4d"/><rect x="793.00" y="104.10" width="3.2" height="3.2" fill="#e69a4d"/><rect x="807.9" y="99.8" width="15.5" height="15.5" fill="#2e2e2e"/><rect x="808.40" y="100.30" width="3" height="3" fill="#cfcfcf"/><rect x="808.40" y="104.15" width="3" height="3" fill="#cfcfcf"/><rect x="808.40" y="108.00" width="3" height="3" fill="#cfcfcf"/><rect x="808.40" y="111.85" width="3" height="3" fill="#cfcfcf"/><rect x="812.25" y="100.30" width="3" height="3" fill="#cfcfcf"/><rect x="812.25" y="104.15" width="3" height="3" fill="#cfcfcf"/><rect x="812.25" y="108.00" width="3" height="3" fill="#cfcfcf"/><rect x="812.25" y="111.85" width="3" height="3" fill="#cfcfcf"/><rect x="816.10" y="100.30" width="3" height="3" fill="#cfcfcf"/><rect x="816.10" y="104.15" width="3" height="3" fill="#cfcfcf"/><rect x="816.10" y="108.00" width="3" height="3" fill="#cfcfcf"/><rect x="816.10" y="111.85" width="3" height="3" fill="#cfcfcf"/><rect x="819.95" y="100.30" width="3" height="3" fill="#cfcfcf"/><rect x="819.95" y="104.15" width="3" height="3" fill="#cfcfcf"/><rect x="819.95" y="108.00" width="3" height="3" fill="#cfcfcf"/><rect x="819.95" y="111.85" width="3" height="3" fill="#cfcfcf"/><rect x="815.5" y="91.6" width="16" height="16" fill="#2e2e2e"/><rect x="816.00" y="92.10" width="7.1" height="7.1" fill="#e69a4d"/><rect x="816.00" y="100.00" width="7.1" height="7.1" fill="#e69a4d"/><rect x="823.90" y="92.10" width="7.1" height="7.1" fill="#e69a4d"/><rect x="823.90" y="100.00" width="7.1" height="7.1" fill="#e69a4d"/><rect x="843" y="99.3" width="15" height="16" fill="#e69a4d" stroke="#2e2e2e" stroke-width="0.8"/><path d="M843 99.3L858 115.3" stroke="#2e2e2e" stroke-width="0.9"/><g transform="translate(852 91.5)" fill="none" stroke="#2e2e2e" stroke-width="3"><path d="M3 9A6 6 0 0 1 7 1.5"/><path d="M12 4A6 6 0 0 1 8 13"/></g><g transform="translate(852 91.5)"><path d="M3 9A6 6 0 0 1 7 1.5" stroke="#cfcfcf" stroke-width="1.8" fill="none"/><path d="M12 4A6 6 0 0 1 8 13" stroke="#cfcfcf" stroke-width="1.8" fill="none"/><path d="M5.5 -0.5L9.5 1.5L6 4.5Z M9.5 15.5L5.5 13L9 10.5Z" fill="#cfcfcf"/></g><rect x="877.4" y="99.3" width="16" height="16" fill="#2e2e2e"/><rect x="877.90" y="99.80" width="7.1" height="7.1" fill="#e69a4d"/><rect x="877.90" y="107.70" width="7.1" height="7.1" fill="#e69a4d"/><rect x="885.80" y="99.80" width="7.1" height="7.1" fill="#e69a4d"/><rect x="885.80" y="107.70" width="7.1" height="7.1" fill="#e69a4d"/><g transform="translate(886.3 91.5)" fill="none" stroke="#2e2e2e" stroke-width="3"><path d="M3 9A6 6 0 0 1 7 1.5"/><path d="M12 4A6 6 0 0 1 8 13"/></g><g transform="translate(886.3 91.5)"><path d="M3 9A6 6 0 0 1 7 1.5" stroke="#cfcfcf" stroke-width="1.8" fill="none"/><path d="M12 4A6 6 0 0 1 8 13" stroke="#cfcfcf" stroke-width="1.8" fill="none"/><path d="M5.5 -0.5L9.5 1.5L6 4.5Z M9.5 15.5L5.5 13L9 10.5Z" fill="#cfcfcf"/></g><rect x="912" y="87" width="2" height="34" fill="#9a9a9a"/><path d="M937.0 106.5L943.0 103.5L949.0 106.5L943.0 109.5Z" fill="#cfcfcf" stroke="#2e2e2e" stroke-width="0.7" /><path d="M931.0 110.5L937.0 107.5L943.0 110.5L937.0 113.5Z" fill="#cfcfcf" stroke="#2e2e2e" stroke-width="0.7" /><path d="M937.0 114.0L943.0 111.0L949.0 114.0L943.0 117.0Z" fill="#cfcfcf" stroke="#2e2e2e" stroke-width="0.7" /><path d="M926 94L931.5 91L937 94V110L931.5 113L926 110Z" fill="#e69a4d" stroke="#2e2e2e" stroke-width="0.8"/><path d="M926 94L931.5 97L937 94M931.5 97V113" stroke="#2e2e2e" stroke-width="0.8" fill="none"/><path d="M957.0 93.3L963.8 90.0L970.5 93.3L963.8 96.6Z" fill="#cfcfcf" stroke="#2e2e2e" stroke-width="0.7" /><path d="M965.5 98.4L972.2 95.1L979.0 98.4L972.2 101.8Z" fill="none" stroke="#e69a4d" stroke-width="0.7" stroke-dasharray="1.5 1"/><path d="M957.0 104.2L963.8 100.9L970.5 104.2L963.8 107.5Z" fill="#cfcfcf" stroke="#2e2e2e" stroke-width="0.7" /><path d="M974.0 103.8L980.7 100.5L987.5 103.8L980.7 107.1Z" fill="#cfcfcf" stroke="#2e2e2e" stroke-width="0.7" /><path d="M965.5 109.2L972.2 105.9L979.0 109.2L972.2 112.5Z" fill="#e69a4d" stroke="#2e2e2e" stroke-width="0.7" /><path d="M974.0 114.4L980.7 111.1L987.5 114.4L980.7 117.8Z" fill="#cfcfcf" stroke="#2e2e2e" stroke-width="0.7" /><path d="M1006 90.7L1018.5 97.2V110.5L1006 116.8L994 110.5V97.2Z" fill="#e69a4d" stroke="#2e2e2e" stroke-width="0.8"/><path d="M994 97.2L1006 103.5L1018.5 97.2M1006 103.5V116.8" stroke="#c8c8c8" stroke-width="2.6" fill="none"/><rect x="1038.2" y="91.1" width="17" height="16" fill="#2e2e2e"/><rect x="1038.7" y="93" width="7.6" height="6.2" fill="#e69a4d"/><rect x="1047" y="91.6" width="7.7" height="7.6" fill="#e69a4d"/><rect x="1047" y="99.6" width="7.7" height="6.6" fill="#e69a4d"/><rect x="1038.7" y="99.6" width="7.6" height="6.6" fill="#e69a4d"/><rect x="1028.6" y="100.8" width="16.9" height="16" fill="#2e2e2e"/><rect x="1029.1" y="101.3" width="7.4" height="7" fill="#cfcfcf"/><rect x="1029.1" y="109.1" width="7.4" height="7" fill="#cfcfcf"/><rect x="1037.3" y="101.3" width="7.4" height="7" fill="#cfcfcf"/><rect x="1037.3" y="109.1" width="7.4" height="7" fill="#cfcfcf"/><rect x="1027.5" y="106.7" width="2.6" height="2.6" fill="#444" stroke="#ddd" stroke-width="0.8"/><rect x="1027.5" y="115.3" width="2.6" height="2.6" fill="#444" stroke="#ddd" stroke-width="0.8"/><rect x="1035.5" y="115.3" width="2.6" height="2.6" fill="#444" stroke="#ddd" stroke-width="0.8"/><rect x="1040.7" y="103.4" width="2.6" height="2.6" fill="#444" stroke="#ddd" stroke-width="0.8"/><rect x="1040.6" y="103.2" width="3" height="3" fill="none" stroke="#e69a4d" stroke-width="0.9"/><circle cx="1076.6" cy="104" r="11.6" fill="#e69a4d" stroke="#2e2e2e" stroke-width="0.7"/><circle cx="1076.6" cy="104" r="9.3" fill="none" stroke="#2e2e2e" stroke-width="0.8"/><path d="M1076.6 92.4V115.6M1065 104H1088.2M1068.4 95.8L1084.8 112.2M1084.8 95.8L1068.4 112.2" stroke="#2e2e2e" stroke-width="0.8"/><circle cx="1076.6" cy="104" r="1" fill="#2e2e2e"/><rect x="1108.6" y="91.6" width="16" height="16" fill="#cfcfcf" stroke="#2e2e2e" stroke-width="0.8"/><path d="M1108.6 107.6L1124.6 91.6" stroke="#2e2e2e" stroke-width="0.8"/><rect x="1099.3" y="100" width="16" height="16" fill="#e69a4d" stroke="#2e2e2e" stroke-width="0.8"/><path d="M1099.3 100L1115.3 116" stroke="#2e2e2e" stroke-width="0.8"/><path d="M1144.5 104.0L1151.0 100.5L1157.5 104.0L1151.0 107.5Z" fill="#cfcfcf" stroke="#2e2e2e" stroke-width="0.7" /><path d="M1150.0 107.5L1156.5 104.0L1163.0 107.5L1156.5 111.0Z" fill="#cfcfcf" stroke="#2e2e2e" stroke-width="0.7" /><path d="M1139.0 107.5L1145.5 104.0L1152.0 107.5L1145.5 111.0Z" fill="#cfcfcf" stroke="#2e2e2e" stroke-width="0.7" /><path d="M1144.5 111.0L1151.0 107.5L1157.5 111.0L1151.0 114.5Z" fill="#cfcfcf" stroke="#2e2e2e" stroke-width="0.7" /><path d="M1134.5 99.5L1141.5 96.0L1148.5 99.5L1141.5 103.0Z" fill="#e69a4d" stroke="#2e2e2e" stroke-width="0.7" /><path d="M1134.5 103.5L1141.5 100.0L1148.5 103.5L1141.5 107.0Z" fill="#e69a4d" stroke="#2e2e2e" stroke-width="0.7" /><rect x="1172" y="92.8" width="21" height="21" fill="none" stroke="#c8c8c8" stroke-width="1"/><path d="M1174 95L1179.5 100.5M1191 95L1185.5 100.5M1174 111.6L1179.5 106.1M1191 111.6L1185.5 106.1" stroke="#e69a4d" stroke-width="1.1"/><rect x="1179.5" y="100.5" width="5.6" height="5.6" fill="none" stroke="#e69a4d" stroke-width="1.4"/><rect x="1170.4" y="91.2" width="3.2" height="3.2" fill="#444" stroke="#ddd" stroke-width="0.9"/><rect x="1191.6" y="91.2" width="3.2" height="3.2" fill="#444" stroke="#ddd" stroke-width="0.9"/><rect x="1170.4" y="112.2" width="3.2" height="3.2" fill="#444" stroke="#ddd" stroke-width="0.9"/><rect x="1191.6" y="112.2" width="3.2" height="3.2" fill="#444" stroke="#ddd" stroke-width="0.9"/><rect x="1204.5" y="101.7" width="15.2" height="14.3" fill="#2e2e2e"/><rect x="1205.0" y="102.2" width="4.2" height="3.9" fill="#cfcfcf"/><rect x="1205.0" y="106.9" width="4.2" height="3.9" fill="#cfcfcf"/><rect x="1205.0" y="111.6" width="4.2" height="3.9" fill="#cfcfcf"/><rect x="1210.0" y="102.2" width="4.2" height="3.9" fill="#cfcfcf"/><rect x="1210.0" y="106.9" width="4.2" height="3.9" fill="#cfcfcf"/><rect x="1210.0" y="111.6" width="4.2" height="3.9" fill="#cfcfcf"/><rect x="1215.0" y="102.2" width="4.2" height="3.9" fill="#cfcfcf"/><rect x="1215.0" y="106.9" width="4.2" height="3.9" fill="#cfcfcf"/><rect x="1215.0" y="111.6" width="4.2" height="3.9" fill="#cfcfcf"/><circle cx="1219.5" cy="100.8" r="8.4" fill="#e69a4d" stroke="#2e2e2e" stroke-width="0.8"/><path d="M1216.5 92.9V108.7M1222.5 92.9V108.7M1211.4 98H1227.6M1211.4 103.6H1227.6" stroke="#2e2e2e" stroke-width="0.8"/><rect x="1240" y="87" width="2" height="34" fill="#9a9a9a"/><rect x="1357" y="87" width="2" height="34" fill="#9a9a9a"/><path d="M1252.5 115L1252.5 98.6L1268.6 92.4" stroke="#e69a4d" stroke-width="1" fill="none"/><rect x="1251.3" y="97.4" width="2.4" height="2.4" fill="#444" stroke="#e69a4d" stroke-width="0.9"/><rect x="1267.4" y="91.2" width="2.4" height="2.4" fill="#444" stroke="#e69a4d" stroke-width="0.9"/><rect x="1251.3" y="113.8" width="2.4" height="2.4" fill="#444" stroke="#e69a4d" stroke-width="0.9"/><path d="M1258 110L1276 94.5" stroke="#2e2e2e" stroke-width="5.6" stroke-linecap="round"/><path d="M1258 110L1276 94.5" stroke="#cfcfcf" stroke-width="4" stroke-linecap="round"/><path d="M1252.5 115L1260 108" stroke="#cfcfcf" stroke-width="2"/><rect x="1287.4" y="93.4" width="21.7" height="20.5" fill="none" stroke="#c8c8c8" stroke-width="1"/><path d="M1298.3 93.4V113.9" stroke="#e69a4d" stroke-width="1.3"/><rect x="1286.1" y="92.1" width="2.6" height="2.6" fill="#444" stroke="#ddd" stroke-width="0.9"/><rect x="1307.8" y="92.1" width="2.6" height="2.6" fill="#444" stroke="#ddd" stroke-width="0.9"/><rect x="1286.1" y="112.6" width="2.6" height="2.6" fill="#444" stroke="#ddd" stroke-width="0.9"/><rect x="1307.8" y="112.6" width="2.6" height="2.6" fill="#444" stroke="#ddd" stroke-width="0.9"/><rect x="1296.5" y="91.6" width="3.6" height="3.6" fill="#444" stroke="#e69a4d" stroke-width="0.9"/><rect x="1296.5" y="112.1" width="3.6" height="3.6" fill="#444" stroke="#e69a4d" stroke-width="0.9"/><rect x="1320.8" y="92.8" width="10.8" height="11.6" fill="none" stroke="#c8c8c8" stroke-width="0.9" stroke-dasharray="2 1.6"/><rect x="1319.7" y="91.7" width="2.2" height="2.2" fill="#444" stroke="#ddd" stroke-width="0.9"/><rect x="1330.5" y="91.7" width="2.2" height="2.2" fill="#444" stroke="#ddd" stroke-width="0.9"/><rect x="1319.7" y="103.3" width="2.2" height="2.2" fill="#444" stroke="#ddd" stroke-width="0.9"/><rect x="1330.5" y="103.3" width="2.2" height="2.2" fill="#444" stroke="#ddd" stroke-width="0.9"/><rect x="1320.5" y="110" width="4" height="4" fill="#e69a4d"/><path d="M1333 111L1346.5 97" stroke="#2e2e2e" stroke-width="5.2" stroke-linecap="round"/><path d="M1333 111L1346.5 97" stroke="#cfcfcf" stroke-width="3.6" stroke-linecap="round"/><path d="M1329 115L1333 111" stroke="#e69a4d" stroke-width="1" stroke-dasharray="1 1"/><rect x="1369.6" y="92.4" width="23" height="23" fill="#5dae88"/><rect x="1384.3" y="106" width="10.5" height="10.5" fill="#e0e0e0" stroke="#2e2e2e" stroke-width="0.8"/><rect x="1387.80" y="106.00" width="3.50" height="3.50" fill="#333"/><rect x="1384.30" y="109.50" width="3.50" height="3.50" fill="#333"/><rect x="1391.30" y="109.50" width="3.50" height="3.50" fill="#333"/><rect x="1387.80" y="113.00" width="3.50" height="3.50" fill="#333"/><path d="M1405 93.4Q1416 99 1427 93.4V115.4H1409Q1405 115.4 1405 111Z" fill="#5dae88"/><rect x="1419.8" y="106" width="10.5" height="10.5" fill="#e0e0e0" stroke="#2e2e2e" stroke-width="0.8"/><rect x="1423.30" y="106.00" width="3.50" height="3.50" fill="#333"/><rect x="1419.80" y="109.50" width="3.50" height="3.50" fill="#333"/><rect x="1426.80" y="109.50" width="3.50" height="3.50" fill="#333"/><rect x="1423.30" y="113.00" width="3.50" height="3.50" fill="#333"/><path d="M1438.6 104A11 11 0 0 0 1449.6 115.4H1462.7V93.4Q1456 99 1449.6 93.4A11 11 0 0 0 1438.6 104Z" fill="#5dae88"/><rect x="1455" y="106" width="10.5" height="10.5" fill="#e0e0e0" stroke="#2e2e2e" stroke-width="0.8"/><rect x="1458.50" y="106.00" width="3.50" height="3.50" fill="#333"/><rect x="1455.00" y="109.50" width="3.50" height="3.50" fill="#333"/><rect x="1462.00" y="109.50" width="3.50" height="3.50" fill="#333"/><rect x="1458.50" y="113.00" width="3.50" height="3.50" fill="#333"/><path d="M1485.6 90.3L1498 96.5V109L1485.6 116.4L1473 109V96.5Z" fill="#5dae88" stroke="#2e2e2e" stroke-width="0.7"/><path d="M1473 96.5L1485.6 103L1498 96.5M1485.6 103V116.4" stroke="#2e2e2e" stroke-width="1" fill="none"/><rect x="1489" y="106" width="10.5" height="10.5" fill="#e0e0e0" stroke="#2e2e2e" stroke-width="0.8"/><rect x="1492.50" y="106.00" width="3.50" height="3.50" fill="#333"/><rect x="1489.00" y="109.50" width="3.50" height="3.50" fill="#333"/><rect x="1496.00" y="109.50" width="3.50" height="3.50" fill="#333"/><rect x="1492.50" y="113.00" width="3.50" height="3.50" fill="#333"/><path d="M1511 113C1508 106 1516 103 1520 105C1525 107 1530 101 1525 97C1522 95 1527 91 1529 92" stroke="#2e2e2e" stroke-width="5" fill="none" stroke-linecap="round"/><path d="M1511 113C1508 106 1516 103 1520 105C1525 107 1530 101 1525 97C1522 95 1527 91 1529 92" stroke="#5dae88" stroke-width="3.4" fill="none" stroke-linecap="round"/><rect x="1524" y="106" width="10.5" height="10.5" fill="#e0e0e0" stroke="#2e2e2e" stroke-width="0.8"/><rect x="1527.50" y="106.00" width="3.50" height="3.50" fill="#333"/><rect x="1524.00" y="109.50" width="3.50" height="3.50" fill="#333"/><rect x="1531.00" y="109.50" width="3.50" height="3.50" fill="#333"/><rect x="1527.50" y="113.00" width="3.50" height="3.50" fill="#333"/><rect x="1543.5" y="91.8" width="24.5" height="24.2" fill="#5dae88"/><rect x="1543.5" y="91.8" width="24.5" height="3.2" fill="#d0d0d0"/><path d="M1545 93.4H1546.5M1548 93.4H1549.5M1551 93.4H1552.5" stroke="#333" stroke-width="1.6"/><rect x="1546.5" y="97.5" width="18.5" height="16" fill="#e0e0e0"/><rect x="1552.7" y="97.5" width="6.17" height="5.33" fill="#333"/><rect x="1546.5" y="102.8" width="6.17" height="5.33" fill="#333"/><rect x="1558.8" y="102.8" width="6.17" height="5.33" fill="#333"/><rect x="1552.7" y="108.2" width="6.17" height="5.33" fill="#333"/><path d="M1578 98L1604 112M1578 112L1604 98" stroke="#5dae88" stroke-width="2.8"/><path d="M1577 96L1583 96.5L1579.5 101Z M1605 96L1599 96.5L1602.5 101Z M1577 114L1583 113.5L1579.5 109Z M1605 114L1599 113.5L1602.5 109Z" fill="#5dae88"/><rect x="1586" y="91.5" width="10" height="10" fill="#e0e0e0" stroke="#2e2e2e" stroke-width="0.8"/><rect x="1589.33" y="91.50" width="3.33" height="3.33" fill="#333"/><rect x="1586.00" y="94.83" width="3.33" height="3.33" fill="#333"/><rect x="1592.67" y="94.83" width="3.33" height="3.33" fill="#333"/><rect x="1589.33" y="98.17" width="3.33" height="3.33" fill="#333"/><path d="M1614 96Q1616 112 1628 116" stroke="#5dae88" stroke-width="1" fill="none"/><path d="M1616 116L1638 93" stroke="#2e2e2e" stroke-width="4.800000000000001" stroke-linecap="round"/><path d="M1616 116L1638 93" stroke="#cfcfcf" stroke-width="3.2" stroke-linecap="round"/><path d="M1616 93L1637 115" stroke="#2e2e2e" stroke-width="4.800000000000001" stroke-linecap="round"/><path d="M1616 93L1637 115" stroke="#cfcfcf" stroke-width="3.2" stroke-linecap="round"/><path d="M1614 95Q1625 89 1635 96" stroke="#5dae88" stroke-width="1" fill="none"/><g transform="translate(45.5,89.5) scale(1.2083333333333333)"><circle cx="12" cy="12" r="9.5" fill="#e69a4d"/><path d="M2.5 12A9.5 3 0 0 0 21.5 12M3.5 8A9 3 0 0 0 20.5 8M3.5 16A9 3 0 0 0 20.5 16M12 2.5L6 17M12 2.5L18 17M12 2.5C5 8 5 17 12 21.5M12 2.5C19 8 19 17 12 21.5" stroke="#444" stroke-width="0.8" fill="none"/></g></g></svg><rect x="470" y="188" width="7" height="18" fill="#333"/><circle cx="473.5" cy="197" r="2.5" fill="#777"/><path d="M471.5 191H475.5L473.5 189Z M471.5 203H475.5L473.5 205Z" fill="#aaa"/></svg>
<div style="left:94px;top:208px;width:384px;height:4px;background:#3a3a3a;"></div>
<div style="left:94px;top:212px;width:384px;height:1px;background:#8a8a8a;"></div>
<div style="left:94px;top:213px;width:384px;height:9px;background:#444444;"></div>
<div class="t" style="left:97px;top:214px;font-size:6px;color:#b8b8b8">View</div>
<div class="t" style="left:117px;top:214px;font-size:6px;color:#b8b8b8">Shading</div>
<div class="t" style="left:146px;top:214px;font-size:6px;color:#b8b8b8">Lighting</div>
<div class="t" style="left:174px;top:214px;font-size:6px;color:#b8b8b8">Show</div>
<div class="t" style="left:196px;top:214px;font-size:6px;color:#b8b8b8">Renderer</div>
<div class="t" style="left:227px;top:214px;font-size:6px;color:#b8b8b8">Panels</div>
<div style="left:94px;top:222px;width:384px;height:114px;background:#5b5b5b;"></div>
<svg style="left:0px;top:0px;" width="1961" height="1229" viewBox="0 0 1961 1229"><defs><radialGradient id="sph" cx="0.5" cy="0.46" r="0.54"><stop offset="0" stop-color="#939393"/><stop offset="0.55" stop-color="#8a8a8a"/><stop offset="0.85" stop-color="#6e6e6e"/><stop offset="1" stop-color="#3a3a3a"/></radialGradient><linearGradient id="sphr" x1="0" y1="0" x2="0" y2="1"><stop offset="0" stop-color="#505050"/><stop offset="1" stop-color="#111"/></linearGradient></defs><circle cx="285.2" cy="281.3" r="28.6" fill="url(#sph)" stroke="url(#sphr)" stroke-width="1.1"/></svg>
<svg style="left:134px;top:272px;" width="8" height="12" viewBox="0 0 8 12"><path d="M1 1V10L3.5 7.5L5.5 11L7 10.3L5 7H8Z" fill="#eee" stroke="#222" stroke-width="0.6"/></svg>
<div class="t" style="left:93px;top:347px;font-size:12px;color:#e4e4e4;">通过单击“多边形建模”工具架中的一个基本体形状，创建一个基本多边形</div>
<div class="t" style="left:93px;top:364px;font-size:12px;color:#e4e4e4;">对象...</div>
<svg style="left:0px;top:0px;" width="1961" height="1229" viewBox="0 0 1961 1229"><circle cx="105.9" cy="398" r="8" fill="#3aa5e0"/><circle cx="129.9" cy="398" r="7.6" fill="none" stroke="#9a9a9a" stroke-width="1.3"/><circle cx="153.9" cy="398" r="7.6" fill="none" stroke="#9a9a9a" stroke-width="1.3"/><circle cx="177.9" cy="398" r="7.6" fill="none" stroke="#9a9a9a" stroke-width="1.3"/><circle cx="201.9" cy="398" r="7.6" fill="none" stroke="#9a9a9a" stroke-width="1.3"/><circle cx="225.9" cy="398" r="7.6" fill="none" stroke="#9a9a9a" stroke-width="1.3"/><circle cx="249.9" cy="398" r="7.6" fill="none" stroke="#9a9a9a" stroke-width="1.3"/><circle cx="273.9" cy="398" r="7.6" fill="none" stroke="#9a9a9a" stroke-width="1.3"/><circle cx="297.9" cy="398" r="7.6" fill="none" stroke="#9a9a9a" stroke-width="1.3"/><circle cx="321.9" cy="398" r="7.6" fill="none" stroke="#9a9a9a" stroke-width="1.3"/><circle cx="345.9" cy="398" r="7.6" fill="none" stroke="#9a9a9a" stroke-width="1.3"/><circle cx="369.9" cy="398" r="7.6" fill="none" stroke="#9a9a9a" stroke-width="1.3"/></svg>
<div class="t" style="left:393px;top:390px;font-size:15.5px;color:#a8a8a8;">1 of 12</div>
<div class="t" style="left:94px;top:449px;font-size:12px;color:#49b3ef;">了解详细信息</div>
<div style="left:248px;top:442px;width:111px;height:27px;background:transparent;border:1.5px solid #b0b0b0;border-radius:3px;box-sizing:border-box"></div>
<div class="t" style="left:248px;top:449px;width:111px;text-align:center;font-size:12px;color:#e8e8e8">后退</div>
<div style="left:367px;top:443px;width:111px;height:25px;background:#0696d7;border-radius:2px"></div>
<div class="t" style="left:367px;top:449px;width:111px;text-align:center;font-size:12px;color:#ffffff">下一步</div>
</body></html>
